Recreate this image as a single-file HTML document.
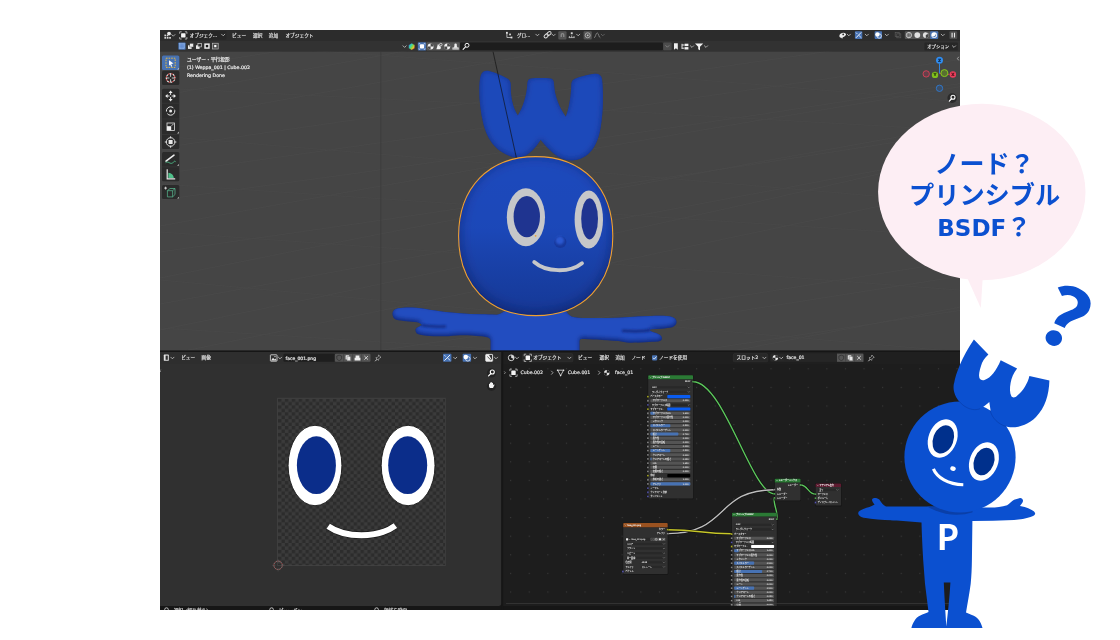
<!DOCTYPE html>
<html lang="ja">
<head>
<meta charset="utf-8">
<title>ノード？プリンシブルBSDF？</title>
<style>
html,body{margin:0;padding:0;background:#fff;}
body{width:1120px;height:640px;overflow:hidden;}
svg{display:block;will-change:transform;}
svg text{font-family:"DejaVu Sans","Liberation Sans","Noto Sans CJK JP",sans-serif;}
</style>
</head>
<body>
<svg width="1120" height="640" viewBox="0 0 1120 640">
<defs>
<clipPath id="shot"><rect x="160" y="30" width="800" height="580"/></clipPath>
<clipPath id="vp"><rect x="160" y="51.7" width="800" height="299"/></clipPath>
<clipPath id="ne"><rect x="503" y="352" width="457" height="254"/></clipPath>
<pattern id="chk" x="278" y="398.5" width="6.88" height="6.88" patternUnits="userSpaceOnUse">
<rect width="6.88" height="6.88" fill="#3b3b3b"/><rect width="3.44" height="3.44" fill="#2c2c2c"/><rect x="3.44" y="3.44" width="3.44" height="3.44" fill="#2c2c2c"/>
</pattern>
<pattern id="dots" x="612.9" y="359.45" width="18.6" height="18.6" patternUnits="userSpaceOnUse">
<rect x="8.8" y="8.8" width="1.1" height="1.1" fill="#3a3a3a"/>
</pattern>
<linearGradient id="gRain" x1="0" y1="0.1" x2="1" y2="0.9"><stop offset="0" stop-color="#2f7fe8"/><stop offset="0.3" stop-color="#2fd0c0"/><stop offset="0.55" stop-color="#7fd84a"/><stop offset="0.75" stop-color="#f0c030"/><stop offset="1" stop-color="#f04030"/></linearGradient><linearGradient id="gShade" x1="0" y1="0" x2="0" y2="1"><stop offset="0" stop-color="#000" stop-opacity="0"/><stop offset="0.45" stop-color="#000" stop-opacity="0.02"/><stop offset="1" stop-color="#000830" stop-opacity="0.26"/></linearGradient><filter id="b05"><feGaussianBlur stdDeviation="0.8"/></filter><filter id="b1" x="-10%" y="-200%" width="120%" height="500%"><feGaussianBlur stdDeviation="1.1"/></filter><filter id="b3" x="-10%" y="-30%" width="120%" height="160%"><feGaussianBlur stdDeviation="2.2"/></filter><filter id="b4" x="-20%" y="-20%" width="140%" height="140%"><feGaussianBlur stdDeviation="3"/></filter><filter id="b6" x="-20%" y="-20%" width="140%" height="140%"><feGaussianBlur stdDeviation="7"/></filter>
<radialGradient id="gHead" cx="0.45" cy="0.4" r="0.62">
<stop offset="0" stop-color="#1f4cc4"/><stop offset="0.7" stop-color="#1b44b6"/><stop offset="1" stop-color="#15359a"/>
</radialGradient>
<linearGradient id="gHair" x1="0" y1="0" x2="0" y2="1">
<stop offset="0" stop-color="#1f49bc"/><stop offset="1" stop-color="#193ca6"/>
</linearGradient>
<linearGradient id="gArm" x1="0" y1="0" x2="0" y2="1">
<stop offset="0" stop-color="#2049bd"/><stop offset="1" stop-color="#16389c"/>
</linearGradient>
</defs>
<g clip-path="url(#shot)">
<rect x="160.00" y="30.00" width="800.00" height="580.00" fill="#454545"/>
<rect x="160.00" y="30.00" width="800.00" height="11.00" fill="#2c2c2c"/>
<rect x="160.00" y="41.00" width="800.00" height="10.70" fill="#323232"/>
<g clip-path="url(#vp)">
<path d="M160 70 Q560 7.8 960 -62.7" fill="none" stroke="#4b4b4b" stroke-width="0.7"/>
<path d="M160 96 Q560 24.3 960 -57.7" fill="none" stroke="#4b4b4b" stroke-width="0.7"/>
<path d="M160 122 Q560 50.5 960 -24.3" fill="none" stroke="#4b4b4b" stroke-width="0.7"/>
<path d="M160 148 Q560 90.1 960 32.3" fill="none" stroke="#4b4b4b" stroke-width="0.7"/>
<path d="M160 174 Q560 117.6 960 59.6" fill="none" stroke="#4b4b4b" stroke-width="0.7"/>
<path d="M160 200 Q560 146.7 960 83.5" fill="none" stroke="#4b4b4b" stroke-width="0.7"/>
<path d="M160 226 Q560 152.5 960 86.8" fill="none" stroke="#4b4b4b" stroke-width="0.7"/>
<path d="M160 252 Q560 195.4 960 132.1" fill="none" stroke="#4b4b4b" stroke-width="0.7"/>
<path d="M160 278 Q560 196.5 960 125.8" fill="none" stroke="#4b4b4b" stroke-width="0.7"/>
<path d="M160 304 Q560 230.8 960 155.1" fill="none" stroke="#4b4b4b" stroke-width="0.7"/>
<path d="M160 330 Q560 248.2 960 155.5" fill="none" stroke="#4b4b4b" stroke-width="0.7"/>
<path d="M160 356 Q560 275.1 960 189.1" fill="none" stroke="#4b4b4b" stroke-width="0.7"/>
<path d="M160 382 Q560 326.0 960 260.8" fill="none" stroke="#4b4b4b" stroke-width="0.7"/>
<path d="M160 408 Q560 338.3 960 276.3" fill="none" stroke="#4b4b4b" stroke-width="0.7"/>
<path d="M160 434 Q560 371.2 960 310.4" fill="none" stroke="#4b4b4b" stroke-width="0.7"/>
<path d="M160 460 Q560 385.1 960 307.1" fill="none" stroke="#4b4b4b" stroke-width="0.7"/>
<path d="M160 40 Q560 66.6 960 101.9" fill="none" stroke="#494949" stroke-width="0.7"/>
<path d="M160 88 Q560 106.3 960 130.4" fill="none" stroke="#494949" stroke-width="0.7"/>
<path d="M160 136 Q560 168.9 960 203.2" fill="none" stroke="#494949" stroke-width="0.7"/>
<path d="M160 184 Q560 211.1 960 236.6" fill="none" stroke="#494949" stroke-width="0.7"/>
<path d="M160 232 Q560 259.1 960 290.1" fill="none" stroke="#494949" stroke-width="0.7"/>
<path d="M160 280 Q560 317.9 960 351.8" fill="none" stroke="#494949" stroke-width="0.7"/>
<path d="M160 328 Q560 353.6 960 377.8" fill="none" stroke="#494949" stroke-width="0.7"/>
<line x1="380.8" y1="52" x2="380.8" y2="351" stroke="#3b3b3b" stroke-width="0.8"/>
<clipPath id="cArm"><path d="M505 311 C500 313.8 498 314.8 496.5 314.8 C490 314.6 486 314.4 481.5 314.3 C474 314 467 313.7 460 313.2 C452 312.6 445 311.9 438.6 311 C432 310 427 309 422.5 308.4 C416 307.6 411 307.4 406.4 307.6 C402 307.8 398.5 308.2 395.7 308.9 C393.5 309.8 392.3 312 392.5 314.3 C392.7 317 394 318.9 395.7 319.6 C399 320.6 403 321 406.4 321.3 C410 321.6 414 321.9 417.2 322.3 C419.5 322.8 421.5 324 422.5 325.5 C420.5 325.5 420 326 419.3 326.6 C416.8 327.6 415.3 328.8 415.5 330.4 C415.7 332.5 417 333.9 419.3 334.6 C424 335.8 429 336.2 433.2 336.3 C437 336.4 440.5 336.4 444 336.3 C450 336.2 455 335.4 460 335.2 C467 335 474 335.6 481.5 336.3 C484.5 336.7 487 337.2 489 337.9 C490 338.6 490.6 339.8 490.6 341 L490.6 356 L579.5 356 L579.5 341 C579.7 339.8 580.3 339.1 581.1 338.9 C586 338.9 592 339.2 597.2 339.5 C604 340 611 340.6 618.6 341.1 C622 341.8 626 342.6 629.3 342.7 C635 342.8 640 342.5 645.4 342.2 C650 342 654 341.9 658.2 341.6 C660.5 341 662.2 339.8 662 337.9 C661.8 335.8 659 334 656.1 333 C653.5 332.2 651.5 331.4 649.7 330.4 C650 329.8 650.3 329.5 650.7 329.3 C654.5 329.2 658 329.1 661.5 328.8 C665.5 328.4 669 327.8 672.2 327.2 C675 326.2 676.6 324.2 676.5 321.8 C676.4 319.5 674.8 317.8 672.2 317 C670.5 316.3 668.5 316 666.8 315.9 C661 315.7 656 315.8 650.7 315.9 C643 316.2 636 316.6 629.3 317 C622 317.6 615 317.9 607.9 318 C600 318.1 593 318.1 586.4 318 C581 317.8 575 317.6 571.4 316.4 C569 315.2 567.3 313.2 566.1 311.1 Z"/></clipPath><clipPath id="cHair"><path d="M480.6 76 C481.5 72 484.5 70.3 488 70.8 C495 72.5 503 76 508.5 79.3 C510.5 81 511 83.5 510.8 87 C510.6 97 513 108 517.8 115.6 C522.5 108 526.8 96 527.3 84 C527.5 80.5 528.5 78.6 531 78.4 C537 77.8 545 77.8 550.5 78.4 C553 78.8 554 80.5 554 84 C554.5 96 559.5 108 565.8 116.7 C568.5 110 570.8 98 571.3 86 C571.2 82.5 572 80.3 574 79.3 C580 76.5 589 74.5 595 73.8 C599 73.5 601.5 75.5 602 79 C603.5 92 603.5 110 600.8 126.6 C599 138 596 145 592 150 C587 156.5 579 160.5 571.3 160.5 C564.5 160.5 558 157.5 553 153 C548 148.5 543.5 143.5 540.6 139.7 C537.5 145 532 152 526 155.5 C521 158 516 158 511.5 156.8 C504 154 498.5 150.5 494.5 146 C488.5 139 485.5 132 483.5 124.4 C480.5 112 479.2 100 479.3 90 C479.3 84 479.8 79 480.6 76 Z"/></clipPath><clipPath id="cHead"><path d="M535.7 156.6 C582.7 156.6 612.8000000000001 187.6 612.8000000000001 236.1 C612.8000000000001 284.6 582.7 315.6 535.7 315.6 C488.7 315.6 458.6 284.6 458.6 236.1 C458.6 187.6 488.7 156.6 535.7 156.6 Z"/></clipPath>
<path d="M505 311 C500 313.8 498 314.8 496.5 314.8 C490 314.6 486 314.4 481.5 314.3 C474 314 467 313.7 460 313.2 C452 312.6 445 311.9 438.6 311 C432 310 427 309 422.5 308.4 C416 307.6 411 307.4 406.4 307.6 C402 307.8 398.5 308.2 395.7 308.9 C393.5 309.8 392.3 312 392.5 314.3 C392.7 317 394 318.9 395.7 319.6 C399 320.6 403 321 406.4 321.3 C410 321.6 414 321.9 417.2 322.3 C419.5 322.8 421.5 324 422.5 325.5 C420.5 325.5 420 326 419.3 326.6 C416.8 327.6 415.3 328.8 415.5 330.4 C415.7 332.5 417 333.9 419.3 334.6 C424 335.8 429 336.2 433.2 336.3 C437 336.4 440.5 336.4 444 336.3 C450 336.2 455 335.4 460 335.2 C467 335 474 335.6 481.5 336.3 C484.5 336.7 487 337.2 489 337.9 C490 338.6 490.6 339.8 490.6 341 L490.6 356 L579.5 356 L579.5 341 C579.7 339.8 580.3 339.1 581.1 338.9 C586 338.9 592 339.2 597.2 339.5 C604 340 611 340.6 618.6 341.1 C622 341.8 626 342.6 629.3 342.7 C635 342.8 640 342.5 645.4 342.2 C650 342 654 341.9 658.2 341.6 C660.5 341 662.2 339.8 662 337.9 C661.8 335.8 659 334 656.1 333 C653.5 332.2 651.5 331.4 649.7 330.4 C650 329.8 650.3 329.5 650.7 329.3 C654.5 329.2 658 329.1 661.5 328.8 C665.5 328.4 669 327.8 672.2 327.2 C675 326.2 676.6 324.2 676.5 321.8 C676.4 319.5 674.8 317.8 672.2 317 C670.5 316.3 668.5 316 666.8 315.9 C661 315.7 656 315.8 650.7 315.9 C643 316.2 636 316.6 629.3 317 C622 317.6 615 317.9 607.9 318 C600 318.1 593 318.1 586.4 318 C581 317.8 575 317.6 571.4 316.4 C569 315.2 567.3 313.2 566.1 311.1 Z" fill="#10277a"/>
<g clip-path="url(#cArm)"><path d="M505 311 C500 313.8 498 314.8 496.5 314.8 C490 314.6 486 314.4 481.5 314.3 C474 314 467 313.7 460 313.2 C452 312.6 445 311.9 438.6 311 C432 310 427 309 422.5 308.4 C416 307.6 411 307.4 406.4 307.6 C402 307.8 398.5 308.2 395.7 308.9 C393.5 309.8 392.3 312 392.5 314.3 C392.7 317 394 318.9 395.7 319.6 C399 320.6 403 321 406.4 321.3 C410 321.6 414 321.9 417.2 322.3 C419.5 322.8 421.5 324 422.5 325.5 C420.5 325.5 420 326 419.3 326.6 C416.8 327.6 415.3 328.8 415.5 330.4 C415.7 332.5 417 333.9 419.3 334.6 C424 335.8 429 336.2 433.2 336.3 C437 336.4 440.5 336.4 444 336.3 C450 336.2 455 335.4 460 335.2 C467 335 474 335.6 481.5 336.3 C484.5 336.7 487 337.2 489 337.9 C490 338.6 490.6 339.8 490.6 341 L490.6 356 L579.5 356 L579.5 341 C579.7 339.8 580.3 339.1 581.1 338.9 C586 338.9 592 339.2 597.2 339.5 C604 340 611 340.6 618.6 341.1 C622 341.8 626 342.6 629.3 342.7 C635 342.8 640 342.5 645.4 342.2 C650 342 654 341.9 658.2 341.6 C660.5 341 662.2 339.8 662 337.9 C661.8 335.8 659 334 656.1 333 C653.5 332.2 651.5 331.4 649.7 330.4 C650 329.8 650.3 329.5 650.7 329.3 C654.5 329.2 658 329.1 661.5 328.8 C665.5 328.4 669 327.8 672.2 327.2 C675 326.2 676.6 324.2 676.5 321.8 C676.4 319.5 674.8 317.8 672.2 317 C670.5 316.3 668.5 316 666.8 315.9 C661 315.7 656 315.8 650.7 315.9 C643 316.2 636 316.6 629.3 317 C622 317.6 615 317.9 607.9 318 C600 318.1 593 318.1 586.4 318 C581 317.8 575 317.6 571.4 316.4 C569 315.2 567.3 313.2 566.1 311.1 Z" fill="#204ec0" filter="url(#b3)" transform="translate(0 -2)"/></g>
<g clip-path="url(#cArm)"><path d="M421.5 325.2 C428 326.6 436 327 446 326.4 M650.5 330 C643 331.4 634 331.6 622 330.8" fill="none" stroke="#122c82" stroke-width="2.4" filter="url(#b1)"/></g>
<path d="M480.6 76 C481.5 72 484.5 70.3 488 70.8 C495 72.5 503 76 508.5 79.3 C510.5 81 511 83.5 510.8 87 C510.6 97 513 108 517.8 115.6 C522.5 108 526.8 96 527.3 84 C527.5 80.5 528.5 78.6 531 78.4 C537 77.8 545 77.8 550.5 78.4 C553 78.8 554 80.5 554 84 C554.5 96 559.5 108 565.8 116.7 C568.5 110 570.8 98 571.3 86 C571.2 82.5 572 80.3 574 79.3 C580 76.5 589 74.5 595 73.8 C599 73.5 601.5 75.5 602 79 C603.5 92 603.5 110 600.8 126.6 C599 138 596 145 592 150 C587 156.5 579 160.5 571.3 160.5 C564.5 160.5 558 157.5 553 153 C548 148.5 543.5 143.5 540.6 139.7 C537.5 145 532 152 526 155.5 C521 158 516 158 511.5 156.8 C504 154 498.5 150.5 494.5 146 C488.5 139 485.5 132 483.5 124.4 C480.5 112 479.2 100 479.3 90 C479.3 84 479.8 79 480.6 76 Z" fill="#142f88"/>
<g clip-path="url(#cHair)"><path d="M480.6 76 C481.5 72 484.5 70.3 488 70.8 C495 72.5 503 76 508.5 79.3 C510.5 81 511 83.5 510.8 87 C510.6 97 513 108 517.8 115.6 C522.5 108 526.8 96 527.3 84 C527.5 80.5 528.5 78.6 531 78.4 C537 77.8 545 77.8 550.5 78.4 C553 78.8 554 80.5 554 84 C554.5 96 559.5 108 565.8 116.7 C568.5 110 570.8 98 571.3 86 C571.2 82.5 572 80.3 574 79.3 C580 76.5 589 74.5 595 73.8 C599 73.5 601.5 75.5 602 79 C603.5 92 603.5 110 600.8 126.6 C599 138 596 145 592 150 C587 156.5 579 160.5 571.3 160.5 C564.5 160.5 558 157.5 553 153 C548 148.5 543.5 143.5 540.6 139.7 C537.5 145 532 152 526 155.5 C521 158 516 158 511.5 156.8 C504 154 498.5 150.5 494.5 146 C488.5 139 485.5 132 483.5 124.4 C480.5 112 479.2 100 479.3 90 C479.3 84 479.8 79 480.6 76 Z" fill="#1f49ba" filter="url(#b4)" transform="translate(0 -1)"/></g>
<line x1="490.5" y1="40" x2="517.2" y2="161.5" stroke="#101010" stroke-width="0.65"/>
<path d="M535.7 156.6 C582.7 156.6 612.8000000000001 187.6 612.8000000000001 236.1 C612.8000000000001 284.6 582.7 315.6 535.7 315.6 C488.7 315.6 458.6 284.6 458.6 236.1 C458.6 187.6 488.7 156.6 535.7 156.6 Z" fill="#122c82"/>
<g clip-path="url(#cHead)"><path d="M535.7 156.6 C582.7 156.6 612.8000000000001 187.6 612.8000000000001 236.1 C612.8000000000001 284.6 582.7 315.6 535.7 315.6 C488.7 315.6 458.6 284.6 458.6 236.1 C458.6 187.6 488.7 156.6 535.7 156.6 Z" fill="#1e49bc" filter="url(#b6)" transform="translate(0 -2)"/></g>
<path d="M535.7 156.6 C582.7 156.6 612.8000000000001 187.6 612.8000000000001 236.1 C612.8000000000001 284.6 582.7 315.6 535.7 315.6 C488.7 315.6 458.6 284.6 458.6 236.1 C458.6 187.6 488.7 156.6 535.7 156.6 Z" fill="url(#gShade)"/>
<path d="M535.7 156.6 C582.7 156.6 612.8000000000001 187.6 612.8000000000001 236.1 C612.8000000000001 284.6 582.7 315.6 535.7 315.6 C488.7 315.6 458.6 284.6 458.6 236.1 C458.6 187.6 488.7 156.6 535.7 156.6 Z" fill="none" stroke="#f0a030" stroke-width="1.1"/>
<ellipse cx="525.9" cy="217.3" rx="19.1" ry="29" fill="#c6c7c9"/>
<ellipse cx="526.8" cy="216.6" rx="13.2" ry="20.6" fill="#1f3490"/>
<ellipse cx="588.8" cy="219.5" rx="14.2" ry="29" fill="#c6c7c9"/>
<ellipse cx="589.6" cy="218.8" rx="8.4" ry="20.6" fill="#1f3490"/>
<circle cx="535.6" cy="235.8" r="0.9" fill="#f0a030"/>
<circle cx="560.3" cy="242" r="6.1" fill="#18389c"/>
<circle cx="559.8" cy="240.4" r="4.2" fill="#2a58d0" filter="url(#b05)"/>
<path d="M534.2 262 C546 272.5 570 273 582 263.2" fill="none" stroke="#c6c7c9" stroke-width="3.8" stroke-linecap="round"/>
</g>
<rect x="162.00" y="55.50" width="17.30" height="14.50" fill="#4772b3" rx="1.5"/>
<rect x="162.00" y="70.80" width="17.30" height="14.30" fill="#2b2b2b" rx="1.5"/>
<rect x="162.00" y="88.70" width="17.30" height="60.20" fill="#2b2b2b" rx="1.5"/>
<rect x="162.00" y="152.00" width="17.30" height="29.30" fill="#2b2b2b" rx="1.5"/>
<rect x="162.00" y="185.00" width="17.30" height="14.00" fill="#2b2b2b" rx="1.5"/>
<line x1="162" y1="103.2" x2="179.3" y2="103.2" stroke="#3a3a3a" stroke-width="0.6"/>
<line x1="162" y1="119" x2="179.3" y2="119" stroke="#3a3a3a" stroke-width="0.6"/>
<line x1="162" y1="134.5" x2="179.3" y2="134.5" stroke="#3a3a3a" stroke-width="0.6"/>
<line x1="162" y1="166.9" x2="179.3" y2="166.9" stroke="#3a3a3a" stroke-width="0.6"/>
<rect x="166.0" y="58.2" width="9.2" height="9.2" fill="none" stroke="#f0c040" stroke-width="0.9" stroke-dasharray="1.6 1"/>
<path d="M169.0 60.3 L173.5 63.6 L171.2 64 L172.2 66.3 L171.1 66.7 L170.2 64.5 L169.0 65.8 Z" fill="#fff"/>
<path d="M178.9 69.6 L178.9 67.8 L177.1 69.6 Z" fill="#c8c8c8"/>
<circle cx="170.6" cy="78" r="4.3" fill="none" stroke="#e05050" stroke-width="1.1" stroke-dasharray="1.7 1.7"/>
<circle cx="170.6" cy="78" r="4.3" fill="none" stroke="#f0f0f0" stroke-width="1.1" stroke-dasharray="1.7 1.7" stroke-dashoffset="1.7"/>
<path d="M170.6 74V76.8 M170.6 79.2V82 M166.6 78H169.4 M171.79999999999998 78H174.6" stroke="#f0f0f0" stroke-width="0.8"/>
<path d="M170.6 90.6L168.6 93H172.6Z M170.6 101.4L168.6 99H172.6Z M165.2 96L167.6 94V98Z M176.0 96L173.6 94V98Z" fill="#f0f0f0"/>
<path d="M170.6 92.6V95 M170.6 97V99.4 M167.2 96H169.6 M171.6 96H174.0" stroke="#f0f0f0" stroke-width="0.9"/>
<circle cx="170.6" cy="111" r="4.2" fill="none" stroke="#e8e8e8" stroke-width="1" stroke-dasharray="10 2.2"/>
<circle cx="170.6" cy="111" r="1.5" fill="#e8e8e8"/>
<rect x="167.0" y="123.0" width="7.4" height="7.4" fill="none" stroke="#e0e0e0" stroke-width="0.8"/>
<rect x="167.0" y="126.19999999999999" width="4.2" height="4.2" fill="#f0f0f0"/>
<path d="M171.6 125.8L173.6 123.8" stroke="#e8e8e8" stroke-width="0.8"/>
<path d="M178.9 133.4 L178.9 131.6 L177.1 133.4 Z" fill="#c8c8c8"/>
<circle cx="170.6" cy="142" r="4.3" fill="none" stroke="#e8e8e8" stroke-width="0.9"/>
<rect x="168.6" y="140" width="4" height="4" fill="#e8e8e8"/>
<path d="M170.6 136.2V138.4 M170.6 147.8V145.6 M164.79999999999998 142H167.0 M176.4 142H174.2" stroke="#e8e8e8" stroke-width="0.9"/>
<path d="M166.0 161.1L174.0 155.1" stroke="#f0f0f0" stroke-width="1.5" stroke-linecap="round"/>
<path d="M165.6 162.7C168.1 160.5 170.1 164.7 172.6 162.9S174.6 160.3 175.6 162.1" fill="none" stroke="#4fc08a" stroke-width="0.9"/>
<path d="M178.9 165.8 L178.9 164 L177.1 165.8 Z" fill="#c8c8c8"/>
<path d="M167.2 169.3V178.9H175.2" fill="none" stroke="#e8e8e8" stroke-width="1.2"/>
<path d="M168.4 172.7A5.4 5.4 0 0 1 173.79999999999998 177.9H168.4Z" fill="#4fc08a"/>
<path d="M167.4 190.70000000000002L170.0 188.5H175.0V194.5L172.6 196.9H167.4Z M167.4 190.70000000000002H172.6V196.9 M172.6 190.70000000000002L175.0 188.5" fill="none" stroke="#5cc79a" stroke-width="0.65" stroke-linejoin="round"/>
<path d="M165.6 186.70000000000002V189.5 M164.2 188.10000000000002H167.0" stroke="#ececec" stroke-width="0.8"/>
<path d="M178.9 198.6 L178.9 196.8 L177.1 198.6 Z" fill="#c8c8c8"/>
<text x="187.00" y="61.20" font-size="4.76" fill="#e6e6e6" stroke="#e6e6e6" stroke-width="0.22">ユーザー・平行投影</text>
<text x="187.00" y="69.20" font-size="4.74" fill="#e6e6e6" stroke="#e6e6e6" stroke-width="0.22">(1) Weppa_001 | Cube.002</text>
<text x="187.00" y="76.90" font-size="4.72" fill="#e6e6e6" stroke="#e6e6e6" stroke-width="0.22">Rendering Done</text>
<circle cx="169" cy="33.6" r="1.9" fill="#e8e8e8"/>
<rect x="164.4" y="34.6" width="1.7" height="1.7" fill="#d8d8d8"/><rect x="164.4" y="37" width="1.7" height="1.7" fill="#d8d8d8"/><rect x="166.8" y="37" width="1.7" height="1.7" fill="#d8d8d8"/><rect x="169.2" y="37" width="1.7" height="1.7" fill="#d8d8d8"/><rect x="166.8" y="34.9" width="1.4" height="1.4" fill="#d8d8d8"/>
<path d="M171.70 34.60L173.30 36.20L174.90 34.60" fill="none" stroke="#c8c8c8" stroke-width="0.8" stroke-linecap="round" stroke-linejoin="round"/>
<rect x="179.00" y="31.20" width="47.50" height="8.60" fill="#262626" rx="1.4"/>
<path d="M179.70000000000002 33.8v-2h2 M184.9 31.799999999999997h2v2 M186.9 37.0v2h-2 M181.70000000000002 39.0h-2v-2" fill="none" stroke="#d0d0d0" stroke-width="0.75"/>
<rect x="181.10" y="33.20" width="4.40" height="4.40" fill="#f4f4f4" rx="0.5"/>
<text x="189.80" y="36.50" font-size="4.6" fill="#dcdcdc" stroke="#dcdcdc" stroke-width="0.22">オブジェク...</text>
<path d="M221.60 34.20L223.20 35.80L224.80 34.20" fill="none" stroke="#c8c8c8" stroke-width="0.8" stroke-linecap="round" stroke-linejoin="round"/>
<text x="232.00" y="36.50" font-size="4.7" fill="#dcdcdc" stroke="#dcdcdc" stroke-width="0.22">ビュー</text>
<text x="253.00" y="36.50" font-size="4.7" fill="#dcdcdc" stroke="#dcdcdc" stroke-width="0.22">選択</text>
<text x="268.80" y="36.50" font-size="4.7" fill="#dcdcdc" stroke="#dcdcdc" stroke-width="0.22">追加</text>
<text x="285.40" y="36.50" font-size="4.7" fill="#dcdcdc" stroke="#dcdcdc" stroke-width="0.22">オブジェクト</text>
<rect x="178.30" y="42.50" width="7.30" height="7.30" fill="#4772b3" rx="0.8"/>
<rect x="179.4" y="43.6" width="5.1" height="5.1" fill="#6f98d8" stroke="#9bbbea" stroke-width="0.5"/><path d="M181.95 43.6v5.1 M179.4 46.15h5.1" stroke="#5580c4" stroke-width="0.4"/>
<rect x="188" y="45.3" width="3.6" height="3.6" fill="#ececec"/><rect x="189.8" y="43.4" width="3.6" height="3.6" fill="#ececec" stroke="#323232" stroke-width="0.4"/>
<rect x="196" y="45.3" width="3.6" height="3.6" fill="#ececec"/><rect x="197.9" y="43.5" width="3.4" height="3.4" fill="#323232" stroke="#ececec" stroke-width="0.6"/>
<rect x="204.3" y="43.4" width="5.4" height="5.4" fill="#ececec"/><rect x="205.8" y="44.9" width="2.4" height="2.4" fill="#1a1a1a"/>
<rect x="212.4" y="43.2" width="5.8" height="5.8" fill="#4a4a4a" stroke="#c8c8c8" stroke-width="0.6"/><rect x="214.2" y="45" width="2.2" height="2.2" fill="#ffffff"/>
<path d="M506.9 32.8v4.7h4.7" fill="none" stroke="#d4d4d4" stroke-width="0.8"/>
<rect x="506" y="31.9" width="1.8" height="1.8" fill="#e0e0e0"/><rect x="510.6" y="36.6" width="1.8" height="1.8" fill="#e0e0e0"/><rect x="509.2" y="33.6" width="1.7" height="1.7" fill="#e0e0e0"/>
<text x="517.00" y="36.50" font-size="4.5" fill="#dcdcdc" stroke="#dcdcdc" stroke-width="0.22">グロ...</text>
<path d="M535.80 34.20L537.40 35.80L539.00 34.20" fill="none" stroke="#c8c8c8" stroke-width="0.8" stroke-linecap="round" stroke-linejoin="round"/>
<rect x="543.9" y="34.4" width="4.6" height="3" rx="1.5" fill="none" stroke="#e0e0e0" stroke-width="0.95" transform="rotate(-40 546.2 35.9)"/>
<rect x="546.7" y="32" width="4.6" height="3" rx="1.5" fill="none" stroke="#e0e0e0" stroke-width="0.95" transform="rotate(-40 549 33.5)"/>
<path d="M552.00 34.20L553.60 35.80L555.20 34.20" fill="none" stroke="#c8c8c8" stroke-width="0.8" stroke-linecap="round" stroke-linejoin="round"/>
<rect x="558.30" y="31.20" width="8.20" height="8.20" fill="#545454" rx="1"/>
<path d="M560.6 37v-2.2a1.9 1.9 0 0 1 3.8 0V37h-1.3v-2.2a0.6 0.6 0 0 0-1.2 0V37z" fill="#8a8a8a"/>
<path d="M568.7 37.6h6 M569.4 36v1.6 M571.7 35.4v2.2 M574 36v1.6" stroke="#d8d8d8" stroke-width="0.7"/>
<rect x="570.8" y="32.3" width="1.9" height="1.9" fill="#d8d8d8"/>
<path d="M576.60 34.20L578.20 35.80L579.80 34.20" fill="none" stroke="#c8c8c8" stroke-width="0.8" stroke-linecap="round" stroke-linejoin="round"/>
<rect x="583.60" y="31.20" width="8.20" height="8.20" fill="#545454" rx="1"/>
<circle cx="587.7" cy="35.3" r="2.5" fill="none" stroke="#c8c8c8" stroke-width="0.7"/><circle cx="587.7" cy="35.3" r="0.9" fill="#c8c8c8"/>
<path d="M594 37.8c1.6 0 1.8-5 3.2-5s1.6 5 3.2 5" fill="none" stroke="#9a9a9a" stroke-width="0.7"/>
<path d="M601.20 34.20L602.80 35.80L604.40 34.20" fill="none" stroke="#6a6a6a" stroke-width="0.8" stroke-linecap="round" stroke-linejoin="round"/>
<path d="M403.00 45.80L404.60 47.40L406.20 45.80" fill="none" stroke="#c8c8c8" stroke-width="0.8" stroke-linecap="round" stroke-linejoin="round"/>
<path d="M411.700 43.200l3 1.700v3.400l-3 1.700l-3-1.700v-3.400z" fill="url(#gRain)" stroke="#5a2a3a" stroke-width="0.3"/>
<rect x="417.80" y="42.30" width="8.40" height="8.20" fill="#4772b3" rx="0.8"/>
<path d="M419 44.6v-1.2h1.2 M423.800 43.400h1.2v1.2 M425 48.200v1.200h-1.200 M420.200 49.400h-1.200v-1.200" fill="none" stroke="#dfe8f8" stroke-width="0.6"/>
<rect x="419.900" y="44.300" width="4.200" height="4.200" fill="#fff" rx="0.9"/>
<rect x="426.40" y="42.30" width="33.40" height="8.20" fill="#555555" rx="0.8"/>
<circle cx="430.6" cy="46.4" r="3" fill="#f0f0f0"/><path d="M430.6 43.400a3 3 0 0 1 3 3h-3z M430.6 46.400v3a3 3 0 0 1 -3 -3z" fill="#4a4a4a"/>
<circle cx="447.2" cy="46.4" r="3" fill="#f0f0f0"/><path d="M447.2 43.400a3 3 0 0 1 3 3h-3z M447.2 46.400v3a3 3 0 0 1 -3 -3z" fill="#4a4a4a"/>
<path d="M436.400 49.200l1.600-5.400l1.400 2.200a1.600 1.600 0 1 1 -0.200 3.200z" fill="#f0f0f0"/><circle cx="440.800" cy="44.600" r="1.300" fill="none" stroke="#f0f0f0" stroke-width="0.7"/>
<path d="M452.400 49.400h6.400v-1.800h-1.200l-0.800-1.400v-1.600a1.200 1.200 0 0 0 -2.400 0v1.600l-0.800 1.400h-1.200z" fill="#eeeeee"/><path d="M452.400 48.200h6.400" stroke="#555" stroke-width="0.4"/>
<rect x="460.00" y="42.60" width="203.00" height="7.60" fill="#1d1d1d" rx="1.2"/>
<circle cx="467" cy="45.300" r="2" fill="none" stroke="#f4f4f4" stroke-width="1"/><path d="M465.500 46.900l-2.400 2.500" stroke="#f4f4f4" stroke-width="1.100" stroke-linecap="round"/>
<rect x="663.20" y="42.60" width="8.40" height="7.60" fill="#4c4c4c" rx="1"/>
<path d="M665.80 45.60L667.40 47.20L669.00 45.60" fill="none" stroke="#8a8a8a" stroke-width="0.8" stroke-linecap="round" stroke-linejoin="round"/>
<path d="M674 43.2h3.8v6.6l-1.9-1.6l-1.9 1.6z" fill="#f0f0f0"/>
<path d="M682 43.8v5.2 M682 45h2.4 M682 48.2h2.4" stroke="#f0f0f0" stroke-width="0.9" fill="none"/>
<rect x="684.60" y="43.70" width="3.80" height="2.40" fill="#f0f0f0"/>
<rect x="684.60" y="47.10" width="3.80" height="2.40" fill="#f0f0f0"/>
<path d="M690.40 45.80L692.00 47.40L693.60 45.80" fill="none" stroke="#c8c8c8" stroke-width="0.8" stroke-linecap="round" stroke-linejoin="round"/>
<path d="M695 43.4h8.2l-3.2 3.4v3.4l-1.8-1v-2.4z" fill="#f4f4f4"/>
<path d="M704.40 45.80L706.00 47.40L707.60 45.80" fill="none" stroke="#c8c8c8" stroke-width="0.8" stroke-linecap="round" stroke-linejoin="round"/>
<path d="M839.4 35.4c0.6-2.6 5-3.4 6.4-1.6c1 1.4-1.4 3-3 3.4l-0.6 1.6l-1.2-1.2c-1 0.2-1.8-0.8-1.6-2.2z" fill="#ececec"/><circle cx="843.2" cy="34.4" r="0.9" fill="#2c2c2c"/>
<path d="M847.20 34.20L848.80 35.80L850.40 34.20" fill="none" stroke="#c8c8c8" stroke-width="0.8" stroke-linecap="round" stroke-linejoin="round"/>
<rect x="854.90" y="31.30" width="7.40" height="7.60" fill="#4772b3" rx="0.8"/>
<path d="M856 37.8l5.2-5.4 M857.4 32.4l0 0" stroke="#fff" stroke-width="0.9"/><path d="M858.6 35.2l2.8 2.6 M856 32.6l1.4 1.4" stroke="#dfe8f8" stroke-width="0.9"/>
<path d="M865.20 34.20L866.80 35.80L868.40 34.20" fill="none" stroke="#c8c8c8" stroke-width="0.8" stroke-linecap="round" stroke-linejoin="round"/>
<rect x="874.60" y="31.30" width="7.40" height="7.60" fill="#4772b3" rx="0.8"/>
<circle cx="877.4" cy="34.4" r="2.2" fill="#fff"/><circle cx="879.2" cy="36" r="2.2" fill="none" stroke="#fff" stroke-width="0.7"/>
<path d="M885.20 34.20L886.80 35.80L888.40 34.20" fill="none" stroke="#c8c8c8" stroke-width="0.8" stroke-linecap="round" stroke-linejoin="round"/>
<rect x="895.2" y="32.4" width="4" height="4" fill="none" stroke="#5a5a5a" stroke-width="0.7"/><rect x="896.8" y="33.8" width="4" height="4" fill="none" stroke="#5a5a5a" stroke-width="0.7"/>
<rect x="904.80" y="31.30" width="33.40" height="7.60" fill="#545454" rx="1"/>
<rect x="930.20" y="31.30" width="8.00" height="7.60" fill="#4772b3" rx="1"/>
<circle cx="908.9" cy="35.1" r="2.7" fill="none" stroke="#d8d8d8" stroke-width="0.8"/><ellipse cx="908.9" cy="35.1" rx="1.1" ry="2.7" fill="none" stroke="#d8d8d8" stroke-width="0.5"/>
<circle cx="917.3" cy="35.1" r="2.9" fill="#e0e0e0"/>
<circle cx="925.8" cy="35.1" r="2.9" fill="#e0e0e0"/><path d="M925.8 32.2a2.9 2.9 0 0 1 0 5.8l0-2.9l2.6-1.4z" fill="#444"/>
<circle cx="934.2" cy="35.1" r="2.9" fill="#fff"/><path d="M932 36.6a2.6 2.6 0 0 0 4-3.2a4 4 0 0 1-4 3.2z" fill="#4772b3"/>
<path d="M941.20 34.20L942.80 35.80L944.40 34.20" fill="none" stroke="#c8c8c8" stroke-width="0.8" stroke-linecap="round" stroke-linejoin="round"/>
<rect x="949.40" y="31.30" width="7.80" height="7.60" fill="#4c4c4c" rx="1"/>
<path d="M952.1 32.8v4.6 M954.5 32.8v4.6" stroke="#e8e8e8" stroke-width="1.1"/>
<rect x="924.40" y="42.40" width="33.40" height="8.20" fill="#272727" rx="1.2"/>
<text x="927.20" y="48.10" font-size="4.4" fill="#dcdcdc" stroke="#dcdcdc" stroke-width="0.22">オプション</text>
<path d="M952.40 45.80L954.00 47.40L955.60 45.80" fill="none" stroke="#c8c8c8" stroke-width="0.8" stroke-linecap="round" stroke-linejoin="round"/>
<line x1="939.5" y1="73.6" x2="939.5" y2="63.5" stroke="#2f8cf0" stroke-width="0.9"/>
<line x1="939.5" y1="73.6" x2="949.5" y2="74.4" stroke="#e8405a" stroke-width="0.9"/>
<circle cx="926.2" cy="73.9" r="3.2" fill="#66404a" stroke="#e8405a" stroke-width="0.8"/>
<circle cx="939.5" cy="88.3" r="3.2" fill="#3c4f68" stroke="#2f7fdc" stroke-width="0.8"/>
<circle cx="944.4" cy="73.1" r="3.5" fill="#586f30" stroke="#86c81c" stroke-width="1"/>
<circle cx="935" cy="74.9" r="3.2" fill="#7fbf1c"/>
<circle cx="952.9" cy="74.5" r="3.2" fill="#ec3e5c"/>
<circle cx="939.5" cy="60.2" r="3.5" fill="#2f8cf0"/>
<text x="939.50" y="61.70" font-size="4.2" fill="#10233c" stroke="#10233c" stroke-width="0.22" text-anchor="middle" font-weight="bold">Z</text>
<text x="935.00" y="76.40" font-size="4.2" fill="#243808" stroke="#243808" stroke-width="0.22" text-anchor="middle" font-weight="bold">Y</text>
<text x="952.90" y="76.00" font-size="4.2" fill="#48101a" stroke="#48101a" stroke-width="0.22" text-anchor="middle" font-weight="bold">X</text>
<circle cx="952.2" cy="98.1" r="4.8" fill="#2a2a2a"/>
<circle cx="953" cy="97.2" r="2" fill="none" stroke="#fff" stroke-width="1.1"/><path d="M951.5 98.8l-2.2 2.3" stroke="#fff" stroke-width="1.3" stroke-linecap="round"/>
<path d="M958.8 56.8l-1.4 1.8l1.4 1.8" fill="none" stroke="#c8c8c8" stroke-width="0.7"/>
<rect x="160.00" y="350.40" width="800.00" height="1.80" fill="#161616"/>
</g>
<g clip-path="url(#shot)">
<rect x="160.00" y="352.00" width="343.00" height="258.00" fill="#161616"/>
<path d="M160 352H501.4V603.6a2.4 2.4 0 0 1-2.4 2.4H160Z" fill="#303030"/>
<rect x="160.00" y="352.00" width="341.40" height="11.60" fill="#2e2e2e"/>
<rect x="163.8" y="354.6" width="5" height="6.2" rx="0.6" fill="#e4e4e4"/><rect x="165.6" y="355.6" width="2.2" height="4.2" fill="#2e2e2e"/>
<path d="M170.80 357.20L172.40 358.80L174.00 357.20" fill="none" stroke="#c8c8c8" stroke-width="0.8" stroke-linecap="round" stroke-linejoin="round"/>
<text x="181.20" y="359.10" font-size="4.6" fill="#d8d8d8" stroke="#d8d8d8" stroke-width="0.22">ビュー</text>
<text x="201.60" y="359.10" font-size="4.6" fill="#d8d8d8" stroke="#d8d8d8" stroke-width="0.22">画像</text>
<rect x="270.4" y="354.8" width="6.6" height="6.4" rx="0.6" fill="none" stroke="#e4e4e4" stroke-width="0.8"/><path d="M271 360.6l2-2.8l1.6 1.6l0.8-0.8l1.2 2z" fill="#e4e4e4"/><circle cx="275" cy="356.6" r="0.7" fill="#e4e4e4"/>
<path d="M278.40 357.20L280.00 358.80L281.60 357.20" fill="none" stroke="#c8c8c8" stroke-width="0.8" stroke-linecap="round" stroke-linejoin="round"/>
<rect x="283.40" y="353.80" width="51.40" height="8.00" fill="#1e1e1e" rx="1.2"/>
<text x="285.60" y="359.50" font-size="4.5" fill="#e0e0e0" stroke="#e0e0e0" stroke-width="0.22">face_001.png</text>
<rect x="334.80" y="353.80" width="35.70" height="8.00" fill="#555555" rx="1.2"/>
<line x1="343.6" y1="353.8" x2="343.6" y2="361.8" stroke="#3a3a3a" stroke-width="0.5"/>
<line x1="352.6" y1="353.8" x2="352.6" y2="361.8" stroke="#3a3a3a" stroke-width="0.5"/>
<line x1="361.6" y1="353.8" x2="361.6" y2="361.8" stroke="#3a3a3a" stroke-width="0.5"/>
<path d="M339.2 355.2l2.4 0.8v2.2c0 1.2-1.2 2-2.4 2.4c-1.200-0.400-2.400-1.200-2.400-2.400v-2.200z" fill="none" stroke="#2e2e2e" stroke-width="0.7"/>
<rect x="345.6" y="355.2" width="3.6" height="4.4" rx="0.5" fill="#e8e8e8"/><rect x="347" y="356.4" width="3.6" height="4.4" rx="0.5" fill="#e8e8e8" stroke="#555" stroke-width="0.4"/>
<path d="M354.6 360.400h5.800v-2.600h-1v-2.400h-3.800v2.400h-1z" fill="#f0f0f0"/>
<path d="M364.400 356l3.600 3.600 M368 356l-3.600 3.600" stroke="#e8e8e8" stroke-width="0.8"/>
<path d="M378.600 355l2.400 2.400l-1.200 0.400l-1 1l-0.400 1.600l-1.200-1.200l-2 2l1.800-2.200l-1.200-1.200l1.600-0.400l1-1z" fill="none" stroke="#c8c8c8" stroke-width="0.6"/>
<rect x="443.00" y="353.80" width="8.40" height="8.00" fill="#4772b3" rx="0.8"/>
<path d="M444.400 360.600l5.600-5.600" stroke="#fff" stroke-width="0.9"/><path d="M447.400 357.800l2.800 2.600 M444.400 355.200l1.400 1.400" stroke="#e4ecfa" stroke-width="0.9"/>
<path d="M453.60 357.20L455.20 358.80L456.80 357.20" fill="none" stroke="#c8c8c8" stroke-width="0.8" stroke-linecap="round" stroke-linejoin="round"/>
<rect x="462.70" y="353.80" width="8.40" height="8.00" fill="#4772b3" rx="0.8"/>
<circle cx="465.800" cy="357" r="2.300" fill="#fff"/><circle cx="467.800" cy="358.800" r="2.300" fill="none" stroke="#fff" stroke-width="0.7"/>
<path d="M473.40 357.20L475.00 358.80L476.60 357.20" fill="none" stroke="#c8c8c8" stroke-width="0.8" stroke-linecap="round" stroke-linejoin="round"/>
<rect x="485.800" y="354.400" width="6.800" height="6.800" rx="0.6" fill="none" stroke="#f0f0f0" stroke-width="0.9"/><path d="M485.800 354.400h3l3.800 6.800h-6.800z" fill="#f0f0f0"/><path d="M487.400 356.600l3.600 3.600" stroke="#2e2e2e" stroke-width="0.8"/>
<path d="M494.40 357.20L496.00 358.80L497.60 357.20" fill="none" stroke="#c8c8c8" stroke-width="0.8" stroke-linecap="round" stroke-linejoin="round"/>
<circle cx="491.500" cy="372.900" r="4.600" fill="#242424"/><circle cx="492.300" cy="372" r="2" fill="none" stroke="#fff" stroke-width="1.100"/><path d="M490.800 373.600l-2.200 2.300" stroke="#fff" stroke-width="1.300" stroke-linecap="round"/>
<circle cx="491.500" cy="386.300" r="4.600" fill="#242424"/>
<path d="M489 386.400v-2.400l0.900-0.200v-1l0.900-0.200l0.200-0.400l0.900 0.100l0.200 0.500l0.900 0.300v2.200l0.900-1l0.700 0.500l-1.600 3.200h-3.200z" fill="#f4f4f4"/>
<path d="M160.800 369.600l-0.800 1.200l0.800 1.200" fill="none" stroke="#bbb" stroke-width="0.6"/>
<rect x="277.20" y="397.80" width="168.40" height="168.20" fill="#434343"/>
<rect x="278.00" y="398.60" width="167.00" height="166.60" fill="url(#chk)"/>
<ellipse cx="315" cy="465.500" rx="26.900" ry="40.200" fill="#ffffff" stroke="#161616" stroke-width="0.9"/>
<ellipse cx="316.400" cy="465.200" rx="19.500" ry="28.900" fill="#0b2d8a"/>
<ellipse cx="408.100" cy="465.500" rx="26.900" ry="40.200" fill="#ffffff" stroke="#161616" stroke-width="0.9"/>
<ellipse cx="407.700" cy="465.200" rx="19.500" ry="28.900" fill="#0b2d8a"/>
<path d="M328.200 526.200 C345 538 378 538.500 395.400 525.600" fill="none" stroke="#161616" stroke-width="7.4"/>
<path d="M328.200 526.200 C345 538 378 538.500 395.400 525.600" fill="none" stroke="#ffffff" stroke-width="6"/>
<circle cx="278.100" cy="565.300" r="4.200" fill="none" stroke="#c03a3a" stroke-width="0.8" stroke-dasharray="1.3 1.3"/>
<circle cx="278.100" cy="565.300" r="4.200" fill="none" stroke="#9a9a9a" stroke-width="0.8" stroke-dasharray="1.3 1.3" stroke-dashoffset="1.3"/>
<path d="M278.100 559.300v3.400 M278.100 568v3.400 M272.100 565.300h3.400 M280.800 565.300h3.400" stroke="#555" stroke-width="0.6"/>
<circle cx="166.500" cy="609.600" r="1.800" fill="none" stroke="#d0d0d0" stroke-width="0.9"/>
<text x="174.00" y="612.20" font-size="4.6" fill="#cfcfcf" stroke="#cfcfcf" stroke-width="0.22">選択（切り替え）</text>
<circle cx="271.600" cy="609.600" r="1.800" fill="none" stroke="#d0d0d0" stroke-width="0.9"/>
<text x="279.00" y="612.20" font-size="4.6" fill="#cfcfcf" stroke="#cfcfcf" stroke-width="0.22">ビューパン</text>
<circle cx="376.600" cy="609.600" r="1.800" fill="none" stroke="#d0d0d0" stroke-width="0.9"/>
<text x="384.00" y="612.20" font-size="4.6" fill="#cfcfcf" stroke="#cfcfcf" stroke-width="0.22">領域を設定</text>
</g>
<g clip-path="url(#shot)">
<rect x="503.00" y="352.00" width="457.00" height="258.00" fill="#1d1d1d"/>
<rect x="503.00" y="606.00" width="457.00" height="4.00" fill="#161616"/>
<g clip-path="url(#ne)">
<rect x="503.00" y="352.00" width="457.00" height="254.00" fill="url(#dots)"/>
<rect x="503.00" y="352.00" width="457.00" height="12.00" fill="#1f1f1f"/>
<path d="M693 381.7 C724 381.7 751.5 493.9 774.5 493.9" fill="none" stroke="#0d0d0d" stroke-width="2.4" stroke-linecap="round"/>
<path d="M693 381.7 C724 381.7 751.5 493.9 774.5 493.9" fill="none" stroke="#5cc75c" stroke-width="1.4" stroke-linecap="round"/>
<path d="M667.7 533.6 C729 533.6 715 489.7 774.5 489.7" fill="none" stroke="#0d0d0d" stroke-width="2.4" stroke-linecap="round"/>
<path d="M667.7 533.6 C729 533.6 715 489.7 774.5 489.7" fill="none" stroke="#bebebe" stroke-width="1.4" stroke-linecap="round"/>
<path d="M667.7 529.7 C700 529.7 700 533.7 731.8 533.7" fill="none" stroke="#0d0d0d" stroke-width="2.4" stroke-linecap="round"/>
<path d="M667.7 529.7 C700 529.7 700 533.7 731.8 533.7" fill="none" stroke="#c7c729" stroke-width="1.4" stroke-linecap="round"/>
<path d="M800.5 485 C808 485 808 494.2 815.5 494.2" fill="none" stroke="#0d0d0d" stroke-width="2.4" stroke-linecap="round"/>
<path d="M800.5 485 C808 485 808 494.2 815.5 494.2" fill="none" stroke="#5cc75c" stroke-width="1.4" stroke-linecap="round"/>
<path d="M776.7 518.9 C779.5 517 772 500 774.5 497.9" fill="none" stroke="#0d0d0d" stroke-width="2.4" stroke-linecap="round"/>
<path d="M776.7 518.9 C779.5 517 772 500 774.5 497.9" fill="none" stroke="#5cc75c" stroke-width="1.4" stroke-linecap="round"/>
<rect x="647.70" y="374.95" width="45.80" height="124.30" fill="#0f0f0f" rx="1.2" opacity="0.55"/>
<path d="M648.2 379.15H693.0V497.65a0.8 0.8 0 0 1 -0.8 0.8H649.0a0.8 0.8 0 0 1 -0.8 -0.8Z" fill="#303030"/>
<path d="M648.2 379.15V376.05a0.8 0.8 0 0 1 0.8 -0.8H692.2a0.8 0.8 0 0 1 0.8 0.8V379.15Z" fill="#2b7a35"/>
<path d="M649.70 376.90L650.40 377.60L651.10 376.90" fill="none" stroke="#d0d0d0" stroke-width="0.4" stroke-linecap="round" stroke-linejoin="round"/>
<text x="652.20" y="377.93" font-size="2.05" fill="#ececec" stroke="#ececec" stroke-width="0.1">プリンシプルBSDF</text>
<text x="690.40" y="382.42" font-size="2.05" fill="#d4d4d4" stroke="#d4d4d4" stroke-width="0.1" text-anchor="end">BSDF</text>
<rect x="692.10" y="380.80" width="1.8" height="1.8" rx="0.5" fill="#63c763" stroke="#111" stroke-width="0.35"/>
<rect x="650.40" y="385.75" width="39.90" height="3.10" fill="#282828" rx="0.7" stroke="#3d3d3d" stroke-width="0.3"/>
<text x="652.00" y="388.02" font-size="2.05" fill="#d4d4d4" stroke="#d4d4d4" stroke-width="0.1">GGX</text>
<path d="M688.10 387.05L688.80 387.75L689.50 387.05" fill="none" stroke="#c8c8c8" stroke-width="0.4" stroke-linecap="round" stroke-linejoin="round"/>
<rect x="650.40" y="390.35" width="39.90" height="3.10" fill="#282828" rx="0.7" stroke="#3d3d3d" stroke-width="0.3"/>
<text x="652.00" y="392.62" font-size="2.05" fill="#d4d4d4" stroke="#d4d4d4" stroke-width="0.1">ランダムウォーク</text>
<path d="M688.10 391.65L688.80 392.35L689.50 391.65" fill="none" stroke="#c8c8c8" stroke-width="0.4" stroke-linecap="round" stroke-linejoin="round"/>
<text x="650.40" y="397.32" font-size="2.05" fill="#d4d4d4" stroke="#d4d4d4" stroke-width="0.1">ベースカラー</text>
<rect x="647.00" y="395.70" width="1.8" height="1.8" rx="0.5" fill="#c7c729" stroke="#111" stroke-width="0.35"/>
<rect x="667.30" y="395.05" width="23.00" height="3.10" fill="#0a5cf0" rx="0.7"/>
<rect x="650.40" y="399.21" width="39.90" height="3.10" fill="#545454" rx="0.7"/>
<text x="652.80" y="401.48" font-size="2.05" fill="#d4d4d4" stroke="#d4d4d4" stroke-width="0.1">サブサーフェス</text>
<text x="688.70" y="401.48" font-size="2.05" fill="#d4d4d4" stroke="#d4d4d4" stroke-width="0.1" text-anchor="end">0.000</text>
<rect x="647.00" y="399.86" width="1.8" height="1.8" rx="0.5" fill="#a1a1a1" stroke="#111" stroke-width="0.35"/>
<rect x="650.40" y="403.37" width="39.90" height="3.10" fill="#282828" rx="0.7" stroke="#3d3d3d" stroke-width="0.3"/>
<text x="652.00" y="405.64" font-size="2.05" fill="#d4d4d4" stroke="#d4d4d4" stroke-width="0.1">サブサーフェス範囲</text>
<path d="M688.10 404.67L688.80 405.37L689.50 404.67" fill="none" stroke="#c8c8c8" stroke-width="0.4" stroke-linecap="round" stroke-linejoin="round"/>
<rect x="647.00" y="404.02" width="1.8" height="1.8" rx="0.5" fill="#6363c7" stroke="#111" stroke-width="0.35"/>
<text x="650.40" y="409.79" font-size="2.05" fill="#d4d4d4" stroke="#d4d4d4" stroke-width="0.1">サブサーフェ..</text>
<rect x="647.00" y="408.17" width="1.8" height="1.8" rx="0.5" fill="#c7c729" stroke="#111" stroke-width="0.35"/>
<rect x="667.30" y="407.52" width="23.00" height="3.10" fill="#0a5cf0" rx="0.7"/>
<rect x="650.40" y="411.68" width="39.90" height="3.10" fill="#545454" rx="0.7"/>
<rect x="650.40" y="411.68" width="4.39" height="3.10" fill="#4772b3" rx="0.7"/>
<text x="652.80" y="413.95" font-size="2.05" fill="#d4d4d4" stroke="#d4d4d4" stroke-width="0.1">サブサーフェスIOR</text>
<text x="688.70" y="413.95" font-size="2.05" fill="#d4d4d4" stroke="#d4d4d4" stroke-width="0.1" text-anchor="end">1.400</text>
<rect x="647.00" y="412.33" width="1.8" height="1.8" rx="0.5" fill="#a1a1a1" stroke="#111" stroke-width="0.35"/>
<rect x="650.40" y="415.84" width="39.90" height="3.10" fill="#545454" rx="0.7"/>
<text x="652.80" y="418.11" font-size="2.05" fill="#d4d4d4" stroke="#d4d4d4" stroke-width="0.1">サブサーフェス異方性</text>
<text x="688.70" y="418.11" font-size="2.05" fill="#d4d4d4" stroke="#d4d4d4" stroke-width="0.1" text-anchor="end">0.000</text>
<rect x="647.00" y="416.49" width="1.8" height="1.8" rx="0.5" fill="#a1a1a1" stroke="#111" stroke-width="0.35"/>
<rect x="650.40" y="420.00" width="39.90" height="3.10" fill="#545454" rx="0.7"/>
<text x="652.80" y="422.27" font-size="2.05" fill="#d4d4d4" stroke="#d4d4d4" stroke-width="0.1">メタリック</text>
<text x="688.70" y="422.27" font-size="2.05" fill="#d4d4d4" stroke="#d4d4d4" stroke-width="0.1" text-anchor="end">0.000</text>
<rect x="647.00" y="420.65" width="1.8" height="1.8" rx="0.5" fill="#a1a1a1" stroke="#111" stroke-width="0.35"/>
<rect x="650.40" y="424.16" width="39.90" height="3.10" fill="#545454" rx="0.7"/>
<rect x="650.40" y="424.16" width="19.95" height="3.10" fill="#4772b3" rx="0.7"/>
<text x="652.80" y="426.43" font-size="2.05" fill="#d4d4d4" stroke="#d4d4d4" stroke-width="0.1">スペキュラー</text>
<text x="688.70" y="426.43" font-size="2.05" fill="#d4d4d4" stroke="#d4d4d4" stroke-width="0.1" text-anchor="end">0.500</text>
<rect x="647.00" y="424.81" width="1.8" height="1.8" rx="0.5" fill="#a1a1a1" stroke="#111" stroke-width="0.35"/>
<rect x="650.40" y="428.31" width="39.90" height="3.10" fill="#545454" rx="0.7"/>
<text x="652.80" y="430.58" font-size="2.05" fill="#d4d4d4" stroke="#d4d4d4" stroke-width="0.1">スペキュラーチント</text>
<text x="688.70" y="430.58" font-size="2.05" fill="#d4d4d4" stroke="#d4d4d4" stroke-width="0.1" text-anchor="end">0.000</text>
<rect x="647.00" y="428.96" width="1.8" height="1.8" rx="0.5" fill="#a1a1a1" stroke="#111" stroke-width="0.35"/>
<rect x="650.40" y="432.47" width="39.90" height="3.10" fill="#545454" rx="0.7"/>
<rect x="650.40" y="432.47" width="27.93" height="3.10" fill="#4772b3" rx="0.7"/>
<text x="652.80" y="434.74" font-size="2.05" fill="#d4d4d4" stroke="#d4d4d4" stroke-width="0.1">粗さ</text>
<text x="688.70" y="434.74" font-size="2.05" fill="#d4d4d4" stroke="#d4d4d4" stroke-width="0.1" text-anchor="end">0.700</text>
<rect x="647.00" y="433.12" width="1.8" height="1.8" rx="0.5" fill="#a1a1a1" stroke="#111" stroke-width="0.35"/>
<rect x="650.40" y="436.63" width="39.90" height="3.10" fill="#545454" rx="0.7"/>
<text x="652.80" y="438.90" font-size="2.05" fill="#d4d4d4" stroke="#d4d4d4" stroke-width="0.1">異方性</text>
<text x="688.70" y="438.90" font-size="2.05" fill="#d4d4d4" stroke="#d4d4d4" stroke-width="0.1" text-anchor="end">0.000</text>
<rect x="647.00" y="437.28" width="1.8" height="1.8" rx="0.5" fill="#a1a1a1" stroke="#111" stroke-width="0.35"/>
<rect x="650.40" y="440.79" width="39.90" height="3.10" fill="#545454" rx="0.7"/>
<text x="652.80" y="443.06" font-size="2.05" fill="#d4d4d4" stroke="#d4d4d4" stroke-width="0.1">異方性の回転</text>
<text x="688.70" y="443.06" font-size="2.05" fill="#d4d4d4" stroke="#d4d4d4" stroke-width="0.1" text-anchor="end">0.000</text>
<rect x="647.00" y="441.44" width="1.8" height="1.8" rx="0.5" fill="#a1a1a1" stroke="#111" stroke-width="0.35"/>
<rect x="650.40" y="444.95" width="39.90" height="3.10" fill="#545454" rx="0.7"/>
<text x="652.80" y="447.22" font-size="2.05" fill="#d4d4d4" stroke="#d4d4d4" stroke-width="0.1">シーン</text>
<text x="688.70" y="447.22" font-size="2.05" fill="#d4d4d4" stroke="#d4d4d4" stroke-width="0.1" text-anchor="end">0.000</text>
<rect x="647.00" y="445.60" width="1.8" height="1.8" rx="0.5" fill="#a1a1a1" stroke="#111" stroke-width="0.35"/>
<rect x="650.40" y="449.10" width="39.90" height="3.10" fill="#545454" rx="0.7"/>
<rect x="650.40" y="449.10" width="19.95" height="3.10" fill="#4772b3" rx="0.7"/>
<text x="652.80" y="451.37" font-size="2.05" fill="#d4d4d4" stroke="#d4d4d4" stroke-width="0.1">シーンチント</text>
<text x="688.70" y="451.37" font-size="2.05" fill="#d4d4d4" stroke="#d4d4d4" stroke-width="0.1" text-anchor="end">0.500</text>
<rect x="647.00" y="449.75" width="1.8" height="1.8" rx="0.5" fill="#a1a1a1" stroke="#111" stroke-width="0.35"/>
<rect x="650.40" y="453.26" width="39.90" height="3.10" fill="#545454" rx="0.7"/>
<text x="652.80" y="455.53" font-size="2.05" fill="#d4d4d4" stroke="#d4d4d4" stroke-width="0.1">クリアコート</text>
<text x="688.70" y="455.53" font-size="2.05" fill="#d4d4d4" stroke="#d4d4d4" stroke-width="0.1" text-anchor="end">0.000</text>
<rect x="647.00" y="453.91" width="1.8" height="1.8" rx="0.5" fill="#a1a1a1" stroke="#111" stroke-width="0.35"/>
<rect x="650.40" y="457.42" width="39.90" height="3.10" fill="#545454" rx="0.7"/>
<rect x="650.40" y="457.42" width="1.20" height="3.10" fill="#4772b3" rx="0.7"/>
<text x="652.80" y="459.69" font-size="2.05" fill="#d4d4d4" stroke="#d4d4d4" stroke-width="0.1">クリアコートの粗さ</text>
<text x="688.70" y="459.69" font-size="2.05" fill="#d4d4d4" stroke="#d4d4d4" stroke-width="0.1" text-anchor="end">0.030</text>
<rect x="647.00" y="458.07" width="1.8" height="1.8" rx="0.5" fill="#a1a1a1" stroke="#111" stroke-width="0.35"/>
<rect x="650.40" y="461.58" width="39.90" height="3.10" fill="#545454" rx="0.7"/>
<text x="652.80" y="463.85" font-size="2.05" fill="#d4d4d4" stroke="#d4d4d4" stroke-width="0.1">IOR</text>
<text x="688.70" y="463.85" font-size="2.05" fill="#d4d4d4" stroke="#d4d4d4" stroke-width="0.1" text-anchor="end">1.450</text>
<rect x="647.00" y="462.23" width="1.8" height="1.8" rx="0.5" fill="#a1a1a1" stroke="#111" stroke-width="0.35"/>
<rect x="650.40" y="465.74" width="39.90" height="3.10" fill="#545454" rx="0.7"/>
<text x="652.80" y="468.01" font-size="2.05" fill="#d4d4d4" stroke="#d4d4d4" stroke-width="0.1">伝播</text>
<text x="688.70" y="468.01" font-size="2.05" fill="#d4d4d4" stroke="#d4d4d4" stroke-width="0.1" text-anchor="end">0.000</text>
<rect x="647.00" y="466.39" width="1.8" height="1.8" rx="0.5" fill="#a1a1a1" stroke="#111" stroke-width="0.35"/>
<rect x="650.40" y="469.89" width="39.90" height="3.10" fill="#545454" rx="0.7"/>
<text x="652.80" y="472.16" font-size="2.05" fill="#d4d4d4" stroke="#d4d4d4" stroke-width="0.1">伝播の粗さ</text>
<text x="688.70" y="472.16" font-size="2.05" fill="#d4d4d4" stroke="#d4d4d4" stroke-width="0.1" text-anchor="end">0.000</text>
<rect x="647.00" y="470.54" width="1.8" height="1.8" rx="0.5" fill="#a1a1a1" stroke="#111" stroke-width="0.35"/>
<text x="650.40" y="476.32" font-size="2.05" fill="#d4d4d4" stroke="#d4d4d4" stroke-width="0.1">放射</text>
<rect x="647.00" y="474.70" width="1.8" height="1.8" rx="0.5" fill="#c7c729" stroke="#111" stroke-width="0.35"/>
<rect x="667.30" y="474.05" width="23.00" height="3.10" fill="#000000" rx="0.7"/>
<rect x="650.40" y="478.21" width="39.90" height="3.10" fill="#545454" rx="0.7"/>
<text x="652.80" y="480.48" font-size="2.05" fill="#d4d4d4" stroke="#d4d4d4" stroke-width="0.1">放射の強さ</text>
<text x="688.70" y="480.48" font-size="2.05" fill="#d4d4d4" stroke="#d4d4d4" stroke-width="0.1" text-anchor="end">1.000</text>
<rect x="647.00" y="478.86" width="1.8" height="1.8" rx="0.5" fill="#a1a1a1" stroke="#111" stroke-width="0.35"/>
<rect x="650.40" y="482.37" width="39.90" height="3.10" fill="#545454" rx="0.7"/>
<rect x="650.40" y="482.37" width="39.90" height="3.10" fill="#4772b3" rx="0.7"/>
<text x="652.80" y="484.64" font-size="2.05" fill="#d4d4d4" stroke="#d4d4d4" stroke-width="0.1">アルファ</text>
<text x="688.70" y="484.64" font-size="2.05" fill="#d4d4d4" stroke="#d4d4d4" stroke-width="0.1" text-anchor="end">1.000</text>
<rect x="647.00" y="483.02" width="1.8" height="1.8" rx="0.5" fill="#a1a1a1" stroke="#111" stroke-width="0.35"/>
<text x="650.40" y="488.80" font-size="2.05" fill="#d4d4d4" stroke="#d4d4d4" stroke-width="0.1">ノーマル</text>
<rect x="647.00" y="487.18" width="1.8" height="1.8" rx="0.5" fill="#6363c7" stroke="#111" stroke-width="0.35"/>
<text x="650.40" y="492.95" font-size="2.05" fill="#d4d4d4" stroke="#d4d4d4" stroke-width="0.1">クリアコート法線</text>
<rect x="647.00" y="491.33" width="1.8" height="1.8" rx="0.5" fill="#6363c7" stroke="#111" stroke-width="0.35"/>
<text x="650.40" y="497.11" font-size="2.05" fill="#d4d4d4" stroke="#d4d4d4" stroke-width="0.1">タンジェント</text>
<rect x="647.00" y="495.49" width="1.8" height="1.8" rx="0.5" fill="#6363c7" stroke="#111" stroke-width="0.35"/>
<rect x="731.50" y="512.40" width="45.80" height="100.40" fill="#0f0f0f" rx="1.2" opacity="0.55"/>
<path d="M732 516.6H776.8V611.2a0.8 0.8 0 0 1 -0.8 0.8H732.8a0.8 0.8 0 0 1 -0.8 -0.8Z" fill="#303030"/>
<path d="M732 516.6V513.5a0.8 0.8 0 0 1 0.8 -0.8H776.0a0.8 0.8 0 0 1 0.8 0.8V516.6Z" fill="#2b7a35"/>
<path d="M733.50 514.35L734.20 515.05L734.90 514.35" fill="none" stroke="#d0d0d0" stroke-width="0.4" stroke-linecap="round" stroke-linejoin="round"/>
<text x="736.00" y="515.38" font-size="2.05" fill="#ececec" stroke="#ececec" stroke-width="0.1">プリンシプルBSDF</text>
<text x="774.20" y="519.87" font-size="2.05" fill="#d4d4d4" stroke="#d4d4d4" stroke-width="0.1" text-anchor="end">BSDF</text>
<rect x="775.90" y="518.25" width="1.8" height="1.8" rx="0.5" fill="#63c763" stroke="#111" stroke-width="0.35"/>
<rect x="734.20" y="523.20" width="39.90" height="3.10" fill="#282828" rx="0.7" stroke="#3d3d3d" stroke-width="0.3"/>
<text x="735.80" y="525.47" font-size="2.05" fill="#d4d4d4" stroke="#d4d4d4" stroke-width="0.1">GGX</text>
<path d="M771.90 524.50L772.60 525.20L773.30 524.50" fill="none" stroke="#c8c8c8" stroke-width="0.4" stroke-linecap="round" stroke-linejoin="round"/>
<rect x="734.20" y="527.80" width="39.90" height="3.10" fill="#282828" rx="0.7" stroke="#3d3d3d" stroke-width="0.3"/>
<text x="735.80" y="530.07" font-size="2.05" fill="#d4d4d4" stroke="#d4d4d4" stroke-width="0.1">ランダムウォーク</text>
<path d="M771.90 529.10L772.60 529.80L773.30 529.10" fill="none" stroke="#c8c8c8" stroke-width="0.4" stroke-linecap="round" stroke-linejoin="round"/>
<text x="734.20" y="534.77" font-size="2.05" fill="#d4d4d4" stroke="#d4d4d4" stroke-width="0.1">ベースカラー</text>
<rect x="730.80" y="533.15" width="1.8" height="1.8" rx="0.5" fill="#c7c729" stroke="#111" stroke-width="0.35"/>
<rect x="734.20" y="536.66" width="39.90" height="3.10" fill="#545454" rx="0.7"/>
<text x="736.60" y="538.93" font-size="2.05" fill="#d4d4d4" stroke="#d4d4d4" stroke-width="0.1">サブサーフェス</text>
<text x="772.50" y="538.93" font-size="2.05" fill="#d4d4d4" stroke="#d4d4d4" stroke-width="0.1" text-anchor="end">0.000</text>
<rect x="730.80" y="537.31" width="1.8" height="1.8" rx="0.5" fill="#a1a1a1" stroke="#111" stroke-width="0.35"/>
<rect x="734.20" y="540.82" width="39.90" height="3.10" fill="#282828" rx="0.7" stroke="#3d3d3d" stroke-width="0.3"/>
<text x="735.80" y="543.09" font-size="2.05" fill="#d4d4d4" stroke="#d4d4d4" stroke-width="0.1">サブサーフェス範囲</text>
<path d="M771.90 542.12L772.60 542.82L773.30 542.12" fill="none" stroke="#c8c8c8" stroke-width="0.4" stroke-linecap="round" stroke-linejoin="round"/>
<rect x="730.80" y="541.47" width="1.8" height="1.8" rx="0.5" fill="#6363c7" stroke="#111" stroke-width="0.35"/>
<text x="734.20" y="547.24" font-size="2.05" fill="#d4d4d4" stroke="#d4d4d4" stroke-width="0.1">サブサーフェ..</text>
<rect x="730.80" y="545.62" width="1.8" height="1.8" rx="0.5" fill="#c7c729" stroke="#111" stroke-width="0.35"/>
<rect x="751.10" y="544.97" width="23.00" height="3.10" fill="#ffffff" rx="0.7"/>
<rect x="734.20" y="549.13" width="39.90" height="3.10" fill="#545454" rx="0.7"/>
<rect x="734.20" y="549.13" width="4.39" height="3.10" fill="#4772b3" rx="0.7"/>
<text x="736.60" y="551.40" font-size="2.05" fill="#d4d4d4" stroke="#d4d4d4" stroke-width="0.1">サブサーフェスIOR</text>
<text x="772.50" y="551.40" font-size="2.05" fill="#d4d4d4" stroke="#d4d4d4" stroke-width="0.1" text-anchor="end">1.400</text>
<rect x="730.80" y="549.78" width="1.8" height="1.8" rx="0.5" fill="#a1a1a1" stroke="#111" stroke-width="0.35"/>
<rect x="734.20" y="553.29" width="39.90" height="3.10" fill="#545454" rx="0.7"/>
<text x="736.60" y="555.56" font-size="2.05" fill="#d4d4d4" stroke="#d4d4d4" stroke-width="0.1">サブサーフェス異方性</text>
<text x="772.50" y="555.56" font-size="2.05" fill="#d4d4d4" stroke="#d4d4d4" stroke-width="0.1" text-anchor="end">0.000</text>
<rect x="730.80" y="553.94" width="1.8" height="1.8" rx="0.5" fill="#a1a1a1" stroke="#111" stroke-width="0.35"/>
<rect x="734.20" y="557.45" width="39.90" height="3.10" fill="#545454" rx="0.7"/>
<text x="736.60" y="559.72" font-size="2.05" fill="#d4d4d4" stroke="#d4d4d4" stroke-width="0.1">メタリック</text>
<text x="772.50" y="559.72" font-size="2.05" fill="#d4d4d4" stroke="#d4d4d4" stroke-width="0.1" text-anchor="end">0.000</text>
<rect x="730.80" y="558.10" width="1.8" height="1.8" rx="0.5" fill="#a1a1a1" stroke="#111" stroke-width="0.35"/>
<rect x="734.20" y="561.61" width="39.90" height="3.10" fill="#545454" rx="0.7"/>
<rect x="734.20" y="561.61" width="19.95" height="3.10" fill="#4772b3" rx="0.7"/>
<text x="736.60" y="563.88" font-size="2.05" fill="#d4d4d4" stroke="#d4d4d4" stroke-width="0.1">スペキュラー</text>
<text x="772.50" y="563.88" font-size="2.05" fill="#d4d4d4" stroke="#d4d4d4" stroke-width="0.1" text-anchor="end">0.500</text>
<rect x="730.80" y="562.26" width="1.8" height="1.8" rx="0.5" fill="#a1a1a1" stroke="#111" stroke-width="0.35"/>
<rect x="734.20" y="565.76" width="39.90" height="3.10" fill="#545454" rx="0.7"/>
<text x="736.60" y="568.03" font-size="2.05" fill="#d4d4d4" stroke="#d4d4d4" stroke-width="0.1">スペキュラーチント</text>
<text x="772.50" y="568.03" font-size="2.05" fill="#d4d4d4" stroke="#d4d4d4" stroke-width="0.1" text-anchor="end">0.000</text>
<rect x="730.80" y="566.41" width="1.8" height="1.8" rx="0.5" fill="#a1a1a1" stroke="#111" stroke-width="0.35"/>
<rect x="734.20" y="569.92" width="39.90" height="3.10" fill="#545454" rx="0.7"/>
<rect x="734.20" y="569.92" width="27.93" height="3.10" fill="#4772b3" rx="0.7"/>
<text x="736.60" y="572.19" font-size="2.05" fill="#d4d4d4" stroke="#d4d4d4" stroke-width="0.1">粗さ</text>
<text x="772.50" y="572.19" font-size="2.05" fill="#d4d4d4" stroke="#d4d4d4" stroke-width="0.1" text-anchor="end">0.700</text>
<rect x="730.80" y="570.57" width="1.8" height="1.8" rx="0.5" fill="#a1a1a1" stroke="#111" stroke-width="0.35"/>
<rect x="734.20" y="574.08" width="39.90" height="3.10" fill="#545454" rx="0.7"/>
<text x="736.60" y="576.35" font-size="2.05" fill="#d4d4d4" stroke="#d4d4d4" stroke-width="0.1">異方性</text>
<text x="772.50" y="576.35" font-size="2.05" fill="#d4d4d4" stroke="#d4d4d4" stroke-width="0.1" text-anchor="end">0.000</text>
<rect x="730.80" y="574.73" width="1.8" height="1.8" rx="0.5" fill="#a1a1a1" stroke="#111" stroke-width="0.35"/>
<rect x="734.20" y="578.24" width="39.90" height="3.10" fill="#545454" rx="0.7"/>
<text x="736.60" y="580.51" font-size="2.05" fill="#d4d4d4" stroke="#d4d4d4" stroke-width="0.1">異方性の回転</text>
<text x="772.50" y="580.51" font-size="2.05" fill="#d4d4d4" stroke="#d4d4d4" stroke-width="0.1" text-anchor="end">0.000</text>
<rect x="730.80" y="578.89" width="1.8" height="1.8" rx="0.5" fill="#a1a1a1" stroke="#111" stroke-width="0.35"/>
<rect x="734.20" y="582.40" width="39.90" height="3.10" fill="#545454" rx="0.7"/>
<text x="736.60" y="584.67" font-size="2.05" fill="#d4d4d4" stroke="#d4d4d4" stroke-width="0.1">シーン</text>
<text x="772.50" y="584.67" font-size="2.05" fill="#d4d4d4" stroke="#d4d4d4" stroke-width="0.1" text-anchor="end">0.000</text>
<rect x="730.80" y="583.05" width="1.8" height="1.8" rx="0.5" fill="#a1a1a1" stroke="#111" stroke-width="0.35"/>
<rect x="734.20" y="586.55" width="39.90" height="3.10" fill="#545454" rx="0.7"/>
<rect x="734.20" y="586.55" width="19.95" height="3.10" fill="#4772b3" rx="0.7"/>
<text x="736.60" y="588.82" font-size="2.05" fill="#d4d4d4" stroke="#d4d4d4" stroke-width="0.1">シーンチント</text>
<text x="772.50" y="588.82" font-size="2.05" fill="#d4d4d4" stroke="#d4d4d4" stroke-width="0.1" text-anchor="end">0.500</text>
<rect x="730.80" y="587.20" width="1.8" height="1.8" rx="0.5" fill="#a1a1a1" stroke="#111" stroke-width="0.35"/>
<rect x="734.20" y="590.71" width="39.90" height="3.10" fill="#545454" rx="0.7"/>
<text x="736.60" y="592.98" font-size="2.05" fill="#d4d4d4" stroke="#d4d4d4" stroke-width="0.1">クリアコート</text>
<text x="772.50" y="592.98" font-size="2.05" fill="#d4d4d4" stroke="#d4d4d4" stroke-width="0.1" text-anchor="end">0.000</text>
<rect x="730.80" y="591.36" width="1.8" height="1.8" rx="0.5" fill="#a1a1a1" stroke="#111" stroke-width="0.35"/>
<rect x="734.20" y="594.87" width="39.90" height="3.10" fill="#545454" rx="0.7"/>
<rect x="734.20" y="594.87" width="1.20" height="3.10" fill="#4772b3" rx="0.7"/>
<text x="736.60" y="597.14" font-size="2.05" fill="#d4d4d4" stroke="#d4d4d4" stroke-width="0.1">クリアコートの粗さ</text>
<text x="772.50" y="597.14" font-size="2.05" fill="#d4d4d4" stroke="#d4d4d4" stroke-width="0.1" text-anchor="end">0.030</text>
<rect x="730.80" y="595.52" width="1.8" height="1.8" rx="0.5" fill="#a1a1a1" stroke="#111" stroke-width="0.35"/>
<rect x="734.20" y="599.03" width="39.90" height="3.10" fill="#545454" rx="0.7"/>
<text x="736.60" y="601.30" font-size="2.05" fill="#d4d4d4" stroke="#d4d4d4" stroke-width="0.1">IOR</text>
<text x="772.50" y="601.30" font-size="2.05" fill="#d4d4d4" stroke="#d4d4d4" stroke-width="0.1" text-anchor="end">1.450</text>
<rect x="730.80" y="599.68" width="1.8" height="1.8" rx="0.5" fill="#a1a1a1" stroke="#111" stroke-width="0.35"/>
<rect x="734.20" y="603.19" width="39.90" height="3.10" fill="#545454" rx="0.7"/>
<text x="736.60" y="605.46" font-size="2.05" fill="#d4d4d4" stroke="#d4d4d4" stroke-width="0.1">伝播</text>
<text x="772.50" y="605.46" font-size="2.05" fill="#d4d4d4" stroke="#d4d4d4" stroke-width="0.1" text-anchor="end">0.000</text>
<rect x="730.80" y="603.84" width="1.8" height="1.8" rx="0.5" fill="#a1a1a1" stroke="#111" stroke-width="0.35"/>
<rect x="734.20" y="607.34" width="39.90" height="3.10" fill="#545454" rx="0.7"/>
<text x="736.60" y="609.61" font-size="2.05" fill="#d4d4d4" stroke="#d4d4d4" stroke-width="0.1">伝播の粗さ</text>
<text x="772.50" y="609.61" font-size="2.05" fill="#d4d4d4" stroke="#d4d4d4" stroke-width="0.1" text-anchor="end">0.000</text>
<rect x="730.80" y="607.99" width="1.8" height="1.8" rx="0.5" fill="#a1a1a1" stroke="#111" stroke-width="0.35"/>
<text x="734.20" y="613.77" font-size="2.05" fill="#d4d4d4" stroke="#d4d4d4" stroke-width="0.1">放射</text>
<rect x="730.80" y="612.15" width="1.8" height="1.8" rx="0.5" fill="#c7c729" stroke="#111" stroke-width="0.35"/>
<rect x="751.10" y="611.50" width="23.00" height="3.10" fill="#000000" rx="0.7"/>
<rect x="774.30" y="478.40" width="26.70" height="22.90" fill="#0f0f0f" rx="1.2" opacity="0.55"/>
<path d="M774.8 482.59999999999997H800.5V499.7a0.8 0.8 0 0 1 -0.8 0.8H775.5999999999999a0.8 0.8 0 0 1 -0.8 -0.8Z" fill="#303030"/>
<path d="M774.8 482.59999999999997V479.5a0.8 0.8 0 0 1 0.8 -0.8H799.7a0.8 0.8 0 0 1 0.8 0.8V482.59999999999997Z" fill="#2b7a35"/>
<path d="M776.30 480.35L777.00 481.05L777.70 480.35" fill="none" stroke="#d0d0d0" stroke-width="0.4" stroke-linecap="round" stroke-linejoin="round"/>
<text x="778.80" y="481.38" font-size="2.05" fill="#ececec" stroke="#ececec" stroke-width="0.1">シェーダーミックス</text>
<text x="798.00" y="485.72" font-size="2.05" fill="#d4d4d4" stroke="#d4d4d4" stroke-width="0.1" text-anchor="end">シェーダー</text>
<rect x="799.60" y="484.10" width="1.8" height="1.8" rx="0.5" fill="#63c763" stroke="#111" stroke-width="0.35"/>
<text x="777.00" y="490.42" font-size="2.05" fill="#d4d4d4" stroke="#d4d4d4" stroke-width="0.1">係数</text>
<rect x="773.60" y="488.80" width="1.8" height="1.8" rx="0.5" fill="#a1a1a1" stroke="#111" stroke-width="0.35"/>
<text x="777.00" y="494.62" font-size="2.05" fill="#d4d4d4" stroke="#d4d4d4" stroke-width="0.1">シェーダー</text>
<rect x="773.60" y="493.00" width="1.8" height="1.8" rx="0.5" fill="#63c763" stroke="#111" stroke-width="0.35"/>
<text x="777.00" y="498.62" font-size="2.05" fill="#d4d4d4" stroke="#d4d4d4" stroke-width="0.1">シェーダー</text>
<rect x="773.60" y="497.00" width="1.8" height="1.8" rx="0.5" fill="#63c763" stroke="#111" stroke-width="0.35"/>
<rect x="815.10" y="483.10" width="26.50" height="23.30" fill="#0f0f0f" rx="1.2" opacity="0.55"/>
<path d="M815.6 486.9H841.1V504.79999999999995a0.8 0.8 0 0 1 -0.8 0.8H816.4a0.8 0.8 0 0 1 -0.8 -0.8Z" fill="#303030"/>
<path d="M815.6 486.9V484.2a0.8 0.8 0 0 1 0.8 -0.8H840.3000000000001a0.8 0.8 0 0 1 0.8 0.8V486.9Z" fill="#5e1b30"/>
<path d="M817.10 485.05L817.80 485.75L818.50 485.05" fill="none" stroke="#d0d0d0" stroke-width="0.4" stroke-linecap="round" stroke-linejoin="round"/>
<text x="819.60" y="486.08" font-size="2.05" fill="#ececec" stroke="#ececec" stroke-width="0.1">マテリアル出力</text>
<rect x="817.60" y="488.35" width="21.30" height="3.10" fill="#282828" rx="0.7" stroke="#3d3d3d" stroke-width="0.3"/>
<text x="819.20" y="490.62" font-size="2.05" fill="#d4d4d4" stroke="#d4d4d4" stroke-width="0.1">全て</text>
<path d="M836.70 489.65L837.40 490.35L838.10 489.65" fill="none" stroke="#c8c8c8" stroke-width="0.4" stroke-linecap="round" stroke-linejoin="round"/>
<text x="817.80" y="494.92" font-size="2.05" fill="#d4d4d4" stroke="#d4d4d4" stroke-width="0.1">サーフェス</text>
<rect x="814.60" y="493.30" width="1.8" height="1.8" rx="0.5" fill="#63c763" stroke="#111" stroke-width="0.35"/>
<text x="817.80" y="498.82" font-size="2.05" fill="#d4d4d4" stroke="#d4d4d4" stroke-width="0.1">ボリューム</text>
<rect x="814.60" y="497.20" width="1.8" height="1.8" rx="0.5" fill="#63c763" stroke="#111" stroke-width="0.35"/>
<text x="817.80" y="503.22" font-size="2.05" fill="#d4d4d4" stroke="#d4d4d4" stroke-width="0.1">ディスプレイスメント</text>
<rect x="814.60" y="501.60" width="1.8" height="1.8" rx="0.5" fill="#6363c7" stroke="#111" stroke-width="0.35"/>
<rect x="622.70" y="522.80" width="45.50" height="52.00" fill="#0f0f0f" rx="1.2" opacity="0.55"/>
<path d="M623.2 527.2H667.7V573.2a0.8 0.8 0 0 1 -0.8 0.8H624.0a0.8 0.8 0 0 1 -0.8 -0.8Z" fill="#303030"/>
<path d="M623.2 527.2V523.9a0.8 0.8 0 0 1 0.8 -0.8H666.9000000000001a0.8 0.8 0 0 1 0.8 0.8V527.2Z" fill="#9a5220"/>
<path d="M624.70 524.75L625.40 525.45L626.10 524.75" fill="none" stroke="#d0d0d0" stroke-width="0.4" stroke-linecap="round" stroke-linejoin="round"/>
<text x="627.20" y="525.78" font-size="2.05" fill="#ececec" stroke="#ececec" stroke-width="0.1">face_001.png</text>
<text x="665.00" y="530.42" font-size="2.05" fill="#d4d4d4" stroke="#d4d4d4" stroke-width="0.1" text-anchor="end">カラー</text>
<rect x="666.80" y="528.80" width="1.8" height="1.8" rx="0.5" fill="#c7c729" stroke="#111" stroke-width="0.35"/>
<text x="665.00" y="534.32" font-size="2.05" fill="#d4d4d4" stroke="#d4d4d4" stroke-width="0.1" text-anchor="end">アルファ</text>
<rect x="666.80" y="532.70" width="1.8" height="1.8" rx="0.5" fill="#a1a1a1" stroke="#111" stroke-width="0.35"/>
<rect x="625.40" y="537.70" width="40.00" height="3.20" fill="#282828" rx="0.7"/>
<rect x="626" y="538.2" width="2.2" height="2.2" fill="#e8e8e8" rx="0.3"/>
<path d="M629.00 539.20L629.60 539.80L630.20 539.20" fill="none" stroke="#c8c8c8" stroke-width="0.4" stroke-linecap="round" stroke-linejoin="round"/>
<text x="631.40" y="540.02" font-size="2.05" fill="#d4d4d4" stroke="#d4d4d4" stroke-width="0.1">face_001.png</text>
<rect x="650.40" y="537.70" width="15.00" height="3.20" fill="#545454" rx="0.7"/>
<circle cx="652.4" cy="539.3" r="1" fill="none" stroke="#2a2a2a" stroke-width="0.4"/><circle cx="656.2" cy="539.3" r="1" fill="none" stroke="#d8d8d8" stroke-width="0.5"/><circle cx="660" cy="539.3" r="1.1" fill="#f0f0f0"/><path d="M662.9 538.4l1.8 1.8m0-1.8l-1.800 1.800" stroke="#e8e8e8" stroke-width="0.45"/>
<rect x="625.40" y="542.35" width="40.00" height="3.10" fill="#282828" rx="0.7" stroke="#3d3d3d" stroke-width="0.3"/>
<text x="627.00" y="544.62" font-size="2.05" fill="#d4d4d4" stroke="#d4d4d4" stroke-width="0.1">リニア</text>
<path d="M663.20 543.65L663.90 544.35L664.60 543.65" fill="none" stroke="#c8c8c8" stroke-width="0.4" stroke-linecap="round" stroke-linejoin="round"/>
<rect x="625.40" y="546.95" width="40.00" height="3.10" fill="#282828" rx="0.7" stroke="#3d3d3d" stroke-width="0.3"/>
<text x="627.00" y="549.22" font-size="2.05" fill="#d4d4d4" stroke="#d4d4d4" stroke-width="0.1">フラット</text>
<path d="M663.20 548.25L663.90 548.95L664.60 548.25" fill="none" stroke="#c8c8c8" stroke-width="0.4" stroke-linecap="round" stroke-linejoin="round"/>
<rect x="625.40" y="551.65" width="40.00" height="3.10" fill="#282828" rx="0.7" stroke="#3d3d3d" stroke-width="0.3"/>
<text x="627.00" y="553.92" font-size="2.05" fill="#d4d4d4" stroke="#d4d4d4" stroke-width="0.1">リピート</text>
<path d="M663.20 552.95L663.90 553.65L664.60 552.95" fill="none" stroke="#c8c8c8" stroke-width="0.4" stroke-linecap="round" stroke-linejoin="round"/>
<rect x="625.40" y="556.25" width="40.00" height="3.10" fill="#282828" rx="0.7" stroke="#3d3d3d" stroke-width="0.3"/>
<text x="627.00" y="558.52" font-size="2.05" fill="#d4d4d4" stroke="#d4d4d4" stroke-width="0.1">単一画像</text>
<path d="M663.20 557.55L663.90 558.25L664.60 557.55" fill="none" stroke="#c8c8c8" stroke-width="0.4" stroke-linecap="round" stroke-linejoin="round"/>
<text x="625.40" y="563.02" font-size="2.05" fill="#d4d4d4" stroke="#d4d4d4" stroke-width="0.1">色空間</text>
<rect x="640.20" y="560.75" width="25.20" height="3.10" fill="#282828" rx="0.7" stroke="#3d3d3d" stroke-width="0.3"/>
<text x="641.80" y="563.02" font-size="2.05" fill="#d4d4d4" stroke="#d4d4d4" stroke-width="0.1">sRGB</text>
<path d="M663.20 562.05L663.90 562.75L664.60 562.05" fill="none" stroke="#c8c8c8" stroke-width="0.4" stroke-linecap="round" stroke-linejoin="round"/>
<text x="625.40" y="567.62" font-size="2.05" fill="#d4d4d4" stroke="#d4d4d4" stroke-width="0.1">アルファ</text>
<rect x="640.20" y="565.35" width="25.20" height="3.10" fill="#282828" rx="0.7" stroke="#3d3d3d" stroke-width="0.3"/>
<text x="641.80" y="567.62" font-size="2.05" fill="#d4d4d4" stroke="#d4d4d4" stroke-width="0.1">ストレート</text>
<path d="M663.20 566.65L663.90 567.35L664.60 566.65" fill="none" stroke="#c8c8c8" stroke-width="0.4" stroke-linecap="round" stroke-linejoin="round"/>
<text x="625.40" y="572.22" font-size="2.05" fill="#d4d4d4" stroke="#d4d4d4" stroke-width="0.1">ベクトル</text>
<rect x="622.00" y="570.60" width="1.8" height="1.8" rx="0.5" fill="#6363c7" stroke="#111" stroke-width="0.35"/>
<rect x="506.00" y="603.20" width="454.00" height="0.90" fill="#3a3a3a" rx="0.4"/>
<circle cx="511.2" cy="357.8" r="2.9" fill="none" stroke="#dcdcdc" stroke-width="0.9"/><path d="M511.2 354.900a2.900 2.900 0 0 1 2.600 4.200l-2.600-1.300z" fill="#dcdcdc"/>
<path d="M515.40 357.20L517.00 358.80L518.60 357.20" fill="none" stroke="#c8c8c8" stroke-width="0.8" stroke-linecap="round" stroke-linejoin="round"/>
<rect x="522.60" y="353.60" width="50.30" height="8.20" fill="#282828" rx="1.3" stroke="#3a3a3a" stroke-width="0.4"/>
<path d="M524.1999999999999 356.2v-2h2 M529.4 354.2h2v2 M531.4 359.40000000000003v2h-2 M526.1999999999999 361.40000000000003h-2v-2" fill="none" stroke="#d0d0d0" stroke-width="0.75"/>
<rect x="525.60" y="355.60" width="4.40" height="4.40" fill="#f4f4f4" rx="0.5"/>
<text x="533.20" y="359.45" font-size="4.7" fill="#dcdcdc" stroke="#dcdcdc" stroke-width="0.22">オブジェクト</text>
<path d="M567.80 357.20L569.40 358.80L571.00 357.20" fill="none" stroke="#c8c8c8" stroke-width="0.8" stroke-linecap="round" stroke-linejoin="round"/>
<text x="578.00" y="359.45" font-size="4.7" fill="#dcdcdc" stroke="#dcdcdc" stroke-width="0.22">ビュー</text>
<text x="599.60" y="359.45" font-size="4.7" fill="#dcdcdc" stroke="#dcdcdc" stroke-width="0.22">選択</text>
<text x="615.40" y="359.45" font-size="4.7" fill="#dcdcdc" stroke="#dcdcdc" stroke-width="0.22">追加</text>
<text x="631.40" y="359.45" font-size="4.7" fill="#dcdcdc" stroke="#dcdcdc" stroke-width="0.22">ノード</text>
<rect x="652.00" y="355.20" width="5.20" height="5.20" fill="#4772b3" rx="0.8"/>
<path d="M653.100 357.800l1.200 1.300l2.200-2.600" fill="none" stroke="#fff" stroke-width="0.8"/>
<text x="659.00" y="359.45" font-size="4.7" fill="#dcdcdc" stroke="#dcdcdc" stroke-width="0.22">ノードを使用</text>
<rect x="733.30" y="353.60" width="34.50" height="8.20" fill="#282828" rx="1.3" stroke="#3a3a3a" stroke-width="0.4"/>
<text x="736.60" y="359.45" font-size="4.7" fill="#dcdcdc" stroke="#dcdcdc" stroke-width="0.22">スロット2</text>
<path d="M762.80 357.20L764.40 358.80L766.00 357.20" fill="none" stroke="#c8c8c8" stroke-width="0.8" stroke-linecap="round" stroke-linejoin="round"/>
<rect x="770.30" y="353.60" width="93.00" height="8.20" fill="#282828" rx="1.3"/>
<circle cx="775.400" cy="357.700" r="2.700" fill="#e8e8e8"/><path d="M775.400 355a2.700 2.700 0 0 1 2.700 2.700h-2.700z M775.400 357.700v2.700a2.700 2.700 0 0 1 -2.700-2.700z" fill="#282828"/>
<path d="M779.60 357.20L781.20 358.80L782.80 357.20" fill="none" stroke="#c8c8c8" stroke-width="0.8" stroke-linecap="round" stroke-linejoin="round"/>
<rect x="784.70" y="353.60" width="52.30" height="8.20" fill="#262626"/>
<text x="786.60" y="359.45" font-size="4.6" fill="#e0e0e0" stroke="#e0e0e0" stroke-width="0.22">face_01</text>
<rect x="837.00" y="353.60" width="26.30" height="8.20" fill="#555555"/>
<path d="M863.300 353.600v8.200h-1.300z" fill="#555"/>
<line x1="845.6" y1="353.6" x2="845.6" y2="361.8" stroke="#3a3a3a" stroke-width="0.5"/>
<line x1="854.6" y1="353.6" x2="854.6" y2="361.8" stroke="#3a3a3a" stroke-width="0.5"/>
<path d="M841.300 355.200l2.400 0.800v2.200c0 1.200-1.200 2-2.400 2.400c-1.200-0.400-2.400-1.200-2.400-2.400v-2.200z" fill="none" stroke="#2e2e2e" stroke-width="0.7"/>
<rect x="847.800" y="355.200" width="3.600" height="4.400" rx="0.5" fill="#e8e8e8"/><rect x="849.200" y="356.400" width="3.600" height="4.400" rx="0.5" fill="#e8e8e8" stroke="#555" stroke-width="0.4"/>
<path d="M857.200 356l3.600 3.600 M860.800 356l-3.600 3.600" stroke="#e8e8e8" stroke-width="0.8"/>
<path d="M871.800 355l2.400 2.400l-1.200 0.400l-1 1l-0.400 1.600l-1.200-1.200l-2 2l1.800-2.200l-1.200-1.200l1.600-0.400l1-1z" fill="none" stroke="#c8c8c8" stroke-width="0.6"/>
<path d="M504.2 371.400l1.200 1.300l-1.200 1.300" fill="none" stroke="#c8c8c8" stroke-width="0.6"/>
<path d="M509.9 371.09999999999997v-2h2 M515.1 369.09999999999997h2v2 M517.1 374.3v2h-2 M511.9 376.3h-2v-2" fill="none" stroke="#d0d0d0" stroke-width="0.75"/>
<rect x="511.30" y="370.50" width="4.40" height="4.40" fill="#f4f4f4" rx="0.5"/>
<text x="520.50" y="374.40" font-size="4.7" fill="#dcdcdc" stroke="#dcdcdc" stroke-width="0.22">Cube.002</text>
<path d="M551.200 370.800l1.800 1.900l-1.800 1.900" fill="none" stroke="#d0d0d0" stroke-width="0.7"/>
<path d="M557.600 370.200h6l-3 5.400z" fill="none" stroke="#e4e4e4" stroke-width="0.8"/><circle cx="557.600" cy="370.200" r="0.800" fill="#e4e4e4"/><circle cx="563.600" cy="370.200" r="0.800" fill="#e4e4e4"/><circle cx="560.600" cy="375.600" r="0.800" fill="#e4e4e4"/>
<text x="567.80" y="374.40" font-size="4.7" fill="#dcdcdc" stroke="#dcdcdc" stroke-width="0.22">Cube.001</text>
<path d="M598.200 370.800l1.800 1.900l-1.800 1.900" fill="none" stroke="#d0d0d0" stroke-width="0.7"/>
<circle cx="606.800" cy="372.700" r="2.700" fill="#e8e8e8"/><path d="M606.800 370a2.700 2.700 0 0 1 2.700 2.700h-2.700z M606.800 372.700v2.700a2.700 2.700 0 0 1 -2.700-2.700z" fill="#1d1d1d"/>
<text x="615.00" y="374.40" font-size="4.7" fill="#dcdcdc" stroke="#dcdcdc" stroke-width="0.22">face_01</text>
</g>
<rect x="501.40" y="352.00" width="1.80" height="258.00" fill="#161616"/>
<path d="M505.6 371.400l-1.200 1.300l1.200 1.300" fill="none" stroke="#c8c8c8" stroke-width="0.01"/>
</g>
<ellipse cx="981.8" cy="192" rx="103.7" ry="88.2" fill="#fdeef4"/>
<path d="M965.5 274 L980.8 308 L982.8 276 Z" fill="#fdeef4"/>
<text x="984.4" y="172.7" font-size="25" font-weight="bold" fill="#0b50d0" text-anchor="middle" style='font-family:"Noto Sans CJK JP","Liberation Sans",sans-serif'>ノード？</text>
<text x="984.6" y="204.3" font-size="25.2" font-weight="bold" fill="#0b50d0" text-anchor="middle" style='font-family:"Noto Sans CJK JP","Liberation Sans",sans-serif'>プリンシブル</text>
<text x="984.3" y="235.6" font-size="25" font-weight="bold" fill="#0b50d0" text-anchor="middle" style='font-family:"Noto Sans CJK JP","Liberation Sans",sans-serif'><tspan style='font-family:"DejaVu Sans","Liberation Sans",sans-serif' font-size="23">BSDF</tspan>？</text>
<text x="0" y="0" font-size="78" font-weight="bold" fill="#0b50d0" text-anchor="middle" style='font-family:"Noto Sans CJK JP","Liberation Sans",sans-serif' transform="translate(1052.2 344.6) rotate(25) scale(1.16 1.03)">?</text>
<path fill-rule="evenodd" fill="#0b50d0" d="M927.4 506.4 L886 506.4 C883 505.5 881.5 502.5 879.3 499.6 C877.5 497.6 873.5 497.4 872.3 498.9 C871.3 500.5 873.2 502.6 874.6 504.5 C872 506.5 867 507.5 864 508.8 C860.5 510 858 511.5 858.2 513.4 C858.4 515.5 861 517 864 517.7 C874 519.5 886 520.2 896.9 520.5 L921.5 522.4 C921.8 535 922.5 548 923.2 560.3 C923.8 568 924.4 576 925 583.8 L928.5 612 C925.5 613.5 923 614.2 920.3 615.4 C917.5 616.8 915.6 618.5 914.5 620.8 C913 623 912 625.5 911.4 627.9 L982.5 627.9 C981.5 624.5 980.3 621.5 978.5 619.4 C976.8 617.2 974.5 616 971.9 615 L966 612.6 C967.6 603 969.5 593 970.7 583.8 C971.5 576 971.8 568 971.9 560.3 L972.4 521 C986 520.8 1000 520.6 1014 520 C1020 519.5 1026 518.5 1030.5 517 C1033.5 516 1035.3 515 1035.2 513.4 C1035 511.8 1033.5 510.8 1031.7 509.9 C1029.5 508.6 1027 507.6 1024.7 506.9 L1020 505.9 C1021.5 504.2 1023.2 502.2 1023 500.5 C1022.8 498.6 1021 497.6 1019.3 498.2 C1017.5 498.6 1015.8 499 1014.1 499.8 C1011.5 501.2 1009.5 503.8 1007.1 505.2 C1002 507 996 507.4 990.7 507.6 L983.6 507.6 Z M943.8 582.6 L950.4 582.6 C949.6 597 948 612 946.3 626.5 C945.4 612 944.4 597 943.8 582.6 Z"/>
<clipPath id="bodyc"><rect x="926.5" y="506.4" width="46" height="14"/></clipPath>
<circle cx="956.5" cy="459.3" r="55.5" fill="#0a3fa8" clip-path="url(#bodyc)"/>
<circle cx="960" cy="457" r="55.6" fill="#0b50d0"/>
<path fill="#0b50d0" d="M973.9 339.5 L988.4 354.6 C984.5 358 982 362 981 366 C979.5 370.5 978.6 375 979.3 377.5 C980 380 982.5 381 985 379.8 C990.5 378 996.5 370.5 1000.7 360.3 L1017.1 368.5 C1013.5 373 1011.5 378 1010.6 383 C1009.6 388 1009.8 393 1011.3 396 C1012.6 398.4 1015.5 397.6 1017.6 395.2 C1023 391 1027.8 383 1029.4 375.9 L1049.4 380.6 C1049 395 1045 408 1036 417 C1028 425 1017 428.5 1008.2 427 C1000 425.5 994 421 991 413.5 L989.3 402.1 C986.8 404.2 983.5 407 980.2 408.7 C977 410 973 410 969.6 408.7 C965 406.8 960.5 403.5 957.8 399.7 C953 393 953 386 954.2 382.8 C956 373 962 357 973.9 339.5 Z"/>
<path d="M958.5 400.5 C962 405 966 407.6 969.6 408.7 C973 410 977 410 980.2 408.7" fill="none" stroke="#083fae" stroke-width="0.7"/>
<path d="M990.2 410.500 C992 418 998 424 1006 426.5" fill="none" stroke="#083fae" stroke-width="0.7"/>
<ellipse cx="942.7" cy="438.5" rx="14.2" ry="19.8" fill="#ffffff" transform="rotate(21 942.7 438.5)"/>
<ellipse cx="943.3" cy="439.4" rx="10.2" ry="14.6" fill="#00308c" transform="rotate(21 943.3 439.4)"/>
<ellipse cx="983.9" cy="461.5" rx="14.2" ry="19.8" fill="#ffffff" transform="rotate(21 983.9 461.5)"/>
<ellipse cx="984" cy="461.5" rx="10" ry="14.2" fill="#00308c" transform="rotate(21 984 461.5)"/>
<ellipse cx="953" cy="468.6" rx="2.8" ry="2.2" fill="#ffffff" transform="rotate(20 953 468.6)"/>
<path d="M933.4 468.800 C937 477.5 948 484.200 963.3 484.800" fill="none" stroke="#ffffff" stroke-width="3.1" stroke-linecap="butt"/>
<text x="947.8" y="549.8" font-size="35.2" font-weight="bold" fill="#ffffff" text-anchor="middle" style='font-family:"Noto Sans CJK JP","Liberation Sans",sans-serif' transform="translate(947.8 0) scale(0.95 1) translate(-947.8 0)">P</text>
</svg>
</body>
</html>
